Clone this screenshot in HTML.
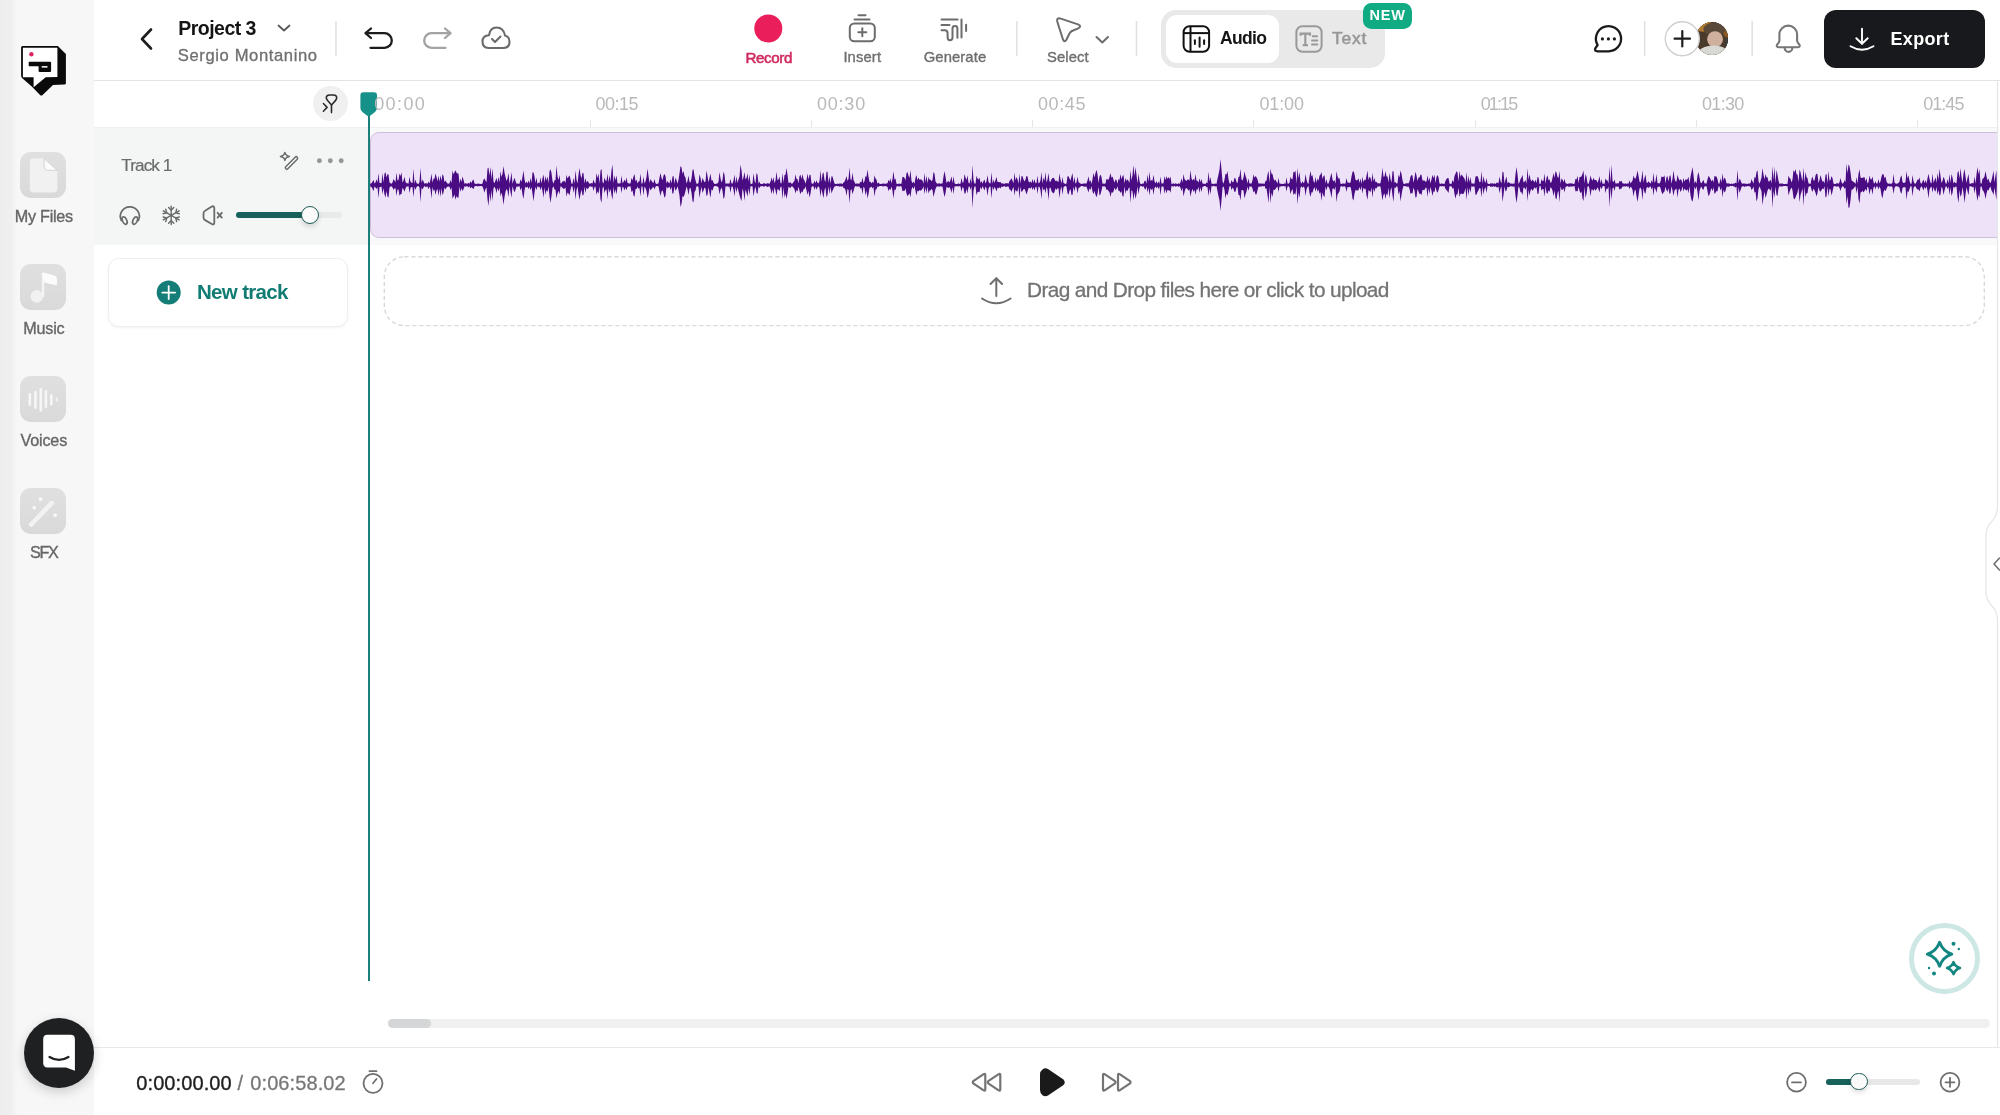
<!DOCTYPE html>
<html><head><meta charset="utf-8">
<style>
html,body{margin:0;padding:0;width:2000px;height:1115px;overflow:hidden;background:#fff;font-family:"Liberation Sans",sans-serif;}
.a{position:absolute;}
.t{position:absolute;line-height:1;white-space:nowrap;transform:translateZ(0);}
svg{position:absolute;overflow:visible;}
</style></head>
<body>
<!-- sidebar -->
<div class="a" style="left:0;top:0;width:94px;height:1115px;background:#f7f7f7;"></div>
<div class="a" style="left:0;top:0;width:20px;height:1115px;background:linear-gradient(90deg,#ededed 0px,#efefef 11px,#f7f7f7 17px);"></div>
<!-- logo -->
<svg style="left:0;top:0" width="94" height="110" viewBox="0 0 94 110">
  <path d="M22.5 46 L57.8 46 L65.9 54.1 L65.9 83.2 Q65.9 84.6 64.5 84.6 L53 85 L42.6 95 Q41.3 96.2 40 95 L31.8 86.6 L22.6 78.6 Q21.1 77.3 21.1 75.8 L21.1 47.5 Q21.1 46 22.5 46Z" fill="#0a0a0a"/>
  <path d="M22.9 47.8 L57.4 47.8 L57.4 77 L45.7 77.2 L33.6 87.3 L33.6 77.2 L22.9 77.2Z" fill="#fff"/>
  <path d="M28.7 61.7 L50 61.7 Q51.1 61.7 51.1 62.8 L51.1 70.9 Q51.1 72 50 72 L39.7 72 Q38.6 72 38.6 70.9 L38.6 66.2 L28.7 66.2Z" fill="#0a0a0a"/>
  <rect x="41.7" y="66.1" width="5.8" height="1.5" fill="#fff"/>
  <circle cx="31.4" cy="54.3" r="2.2" fill="#e0245e"/>
</svg>
<!-- sidebar items -->
<div class="a" style="left:20px;top:152px;width:46px;height:46px;border-radius:11px;background:linear-gradient(180deg,#e0e0e0,#d9d9d9);"></div>
<svg style="left:20px;top:152px" width="46" height="46" viewBox="0 0 46 46">
  <path d="M13.8 6.2 L24.1 6.2 L37.4 18.5 L37.4 36.5 Q37.4 40.5 33.4 40.5 L13.8 40.5 Q9.8 40.5 9.8 36.5 L9.8 10.2 Q9.8 6.2 13.8 6.2Z" fill="#f1f1f1"/>
  <path d="M24.1 6.6 L24.1 14 Q24.1 18.3 28.4 18.3 L37.2 18.3 Z" fill="#fbfbfb" stroke="#cfcfcf" stroke-width="0.9" stroke-linejoin="round"/>
</svg>
<div class="a" style="left:20px;top:264px;width:46px;height:46px;border-radius:11px;background:linear-gradient(180deg,#e0e0e0,#d9d9d9);"></div>
<svg style="left:20px;top:264px" width="46" height="46" viewBox="0 0 46 46">
  <circle cx="16.8" cy="32.4" r="6.3" fill="#f1f1f1"/>
  <rect x="21.8" y="10" width="2.4" height="23" fill="#f4f4f4"/>
  <path d="M21.8 9.6 Q21.8 8.2 23.5 8.6 L34.5 11.6 Q37 12.4 37 15 L37 19.6 Q37 21.6 35 21.1 L24.2 18.6Z" fill="#fbfbfb"/>
</svg>
<div class="a" style="left:20px;top:376px;width:46px;height:46px;border-radius:11px;background:linear-gradient(180deg,#e0e0e0,#d9d9d9);"></div>
<svg style="left:20px;top:376px" width="46" height="46" viewBox="0 0 46 46">
  <g stroke="#f6f6f6" stroke-width="2.6" stroke-linecap="round">
  <line x1="9.8" y1="18.2" x2="9.8" y2="28.6"/><line x1="15.4" y1="16" x2="15.4" y2="31.8"/><line x1="20.8" y1="13" x2="20.8" y2="34.4"/>
  <line x1="25.9" y1="15.6" x2="25.9" y2="30.8"/><line x1="31.3" y1="19.5" x2="31.3" y2="28.3"/>
  </g>
  <line x1="36.9" y1="22.5" x2="36.9" y2="24.8" stroke="#eeeeee" stroke-width="2.2" stroke-linecap="round"/>
</svg>
<div class="a" style="left:20px;top:488px;width:46px;height:46px;border-radius:11px;background:linear-gradient(180deg,#e0e0e0,#d9d9d9);"></div>
<svg style="left:20px;top:488px" width="46" height="46" viewBox="0 0 46 46">
  <line x1="11.2" y1="36.5" x2="31.6" y2="15.2" stroke="#f2f2f2" stroke-width="4.6" stroke-linecap="round"/>
  <rect x="18.9" y="9.6" width="3.4" height="3.4" rx="0.8" fill="#f7f7f7"/>
  <rect x="12.5" y="18.1" width="3.4" height="3.4" rx="0.8" fill="#f7f7f7"/>
  <rect x="33.4" y="25.5" width="3.4" height="3.4" rx="0.8" fill="#f7f7f7"/>
</svg>

<!-- header -->
<div class="a" style="left:94px;top:80px;width:1906px;height:1px;background:#e4e4e4;"></div>
<svg style="left:0;top:0" width="2000" height="80" viewBox="0 0 2000 80">
  <polyline points="151,29.5 142,39 151,48.5" fill="none" stroke="#1e1e1e" stroke-width="2.6" stroke-linecap="round" stroke-linejoin="round"/>
  <polyline points="278.5,25.5 284,30.5 289.5,25.5" fill="none" stroke="#555" stroke-width="1.7" stroke-linecap="round" stroke-linejoin="round"/>
  <g stroke="#e2e2e2" stroke-width="1.6">
    <line x1="336" y1="21" x2="336" y2="56"/><line x1="1016.8" y1="21" x2="1016.8" y2="56"/><line x1="1136.5" y1="21" x2="1136.5" y2="56"/>
    <line x1="1644.7" y1="21" x2="1644.7" y2="56"/><line x1="1752.2" y1="21" x2="1752.2" y2="56"/>
  </g>
  <!-- undo -->
  <g fill="none" stroke="#1c1c1c" stroke-width="2.3" stroke-linecap="round" stroke-linejoin="round">
    <polyline points="371,28.5 365.5,33.2 371,38"/>
    <path d="M366 33.2 L384.5 33.2 A7.3 7.3 0 0 1 384.5 47.8 L370.5 47.8"/>
  </g>
  <!-- redo -->
  <g fill="none" stroke="#a3a3a3" stroke-width="2.3" stroke-linecap="round" stroke-linejoin="round">
    <polyline points="445,28.5 450.5,33.2 445,38"/>
    <path d="M450 33.2 L431.5 33.2 A7.3 7.3 0 0 0 431.5 47.8 L445.5 47.8"/>
  </g>
  <!-- cloud -->
  <g fill="none" stroke="#6b6b6b" stroke-width="2.1" stroke-linecap="round" stroke-linejoin="round">
    <path d="M488.5 48 Q482.5 48 482.5 41.5 Q482.5 35.5 489 35.2 Q490 27.5 496.5 27.5 Q503.5 27.5 505 35.5 Q509.5 36.5 509.5 41.8 Q509.5 48 503.5 48 Z"/>
    <polyline points="492,39 495,42 500.5,36.5"/>
  </g>
  <!-- record -->
  <circle cx="768.3" cy="28.5" r="14" fill="#e91e5b"/>
  <!-- insert -->
  <g fill="none" stroke="#6c6c6c" stroke-width="2" stroke-linecap="round">
    <line x1="858.5" y1="15.3" x2="865.5" y2="15.3"/>
    <line x1="854.5" y1="19.5" x2="869.5" y2="19.5"/>
    <rect x="849.8" y="23.5" width="25" height="17.8" rx="4.5"/>
    <line x1="862.3" y1="28.2" x2="862.3" y2="36.2"/><line x1="858.3" y1="32.2" x2="866.3" y2="32.2"/>
  </g>
  <!-- generate -->
  <g fill="none" stroke="#6c6c6c" stroke-width="2" stroke-linecap="round" stroke-linejoin="round">
    <line x1="941.5" y1="19.6" x2="957.6" y2="19.6"/>
    <line x1="941.5" y1="25" x2="949.5" y2="25"/>
    <path d="M941.5 30.3 L944.8 30.3 Q947.6 30.3 947.6 33.2 L947.6 37.6 Q947.6 40.2 950.05 40.2 Q952.5 40.2 952.5 37.6 L952.5 28.5 Q952.5 26.1 954.95 26.1 Q957.4 26.1 957.4 28.5 L957.4 37.8"/>
    <line x1="961.5" y1="19.5" x2="961.5" y2="37.6"/>
    <line x1="966.1" y1="24.8" x2="966.1" y2="31"/>
  </g>
  <!-- select -->
  <g fill="none" stroke="#6c6c6c" stroke-width="2" stroke-linecap="round" stroke-linejoin="round">
    <path d="M1057.3 21.8 Q1056.2 17.4 1060.8 18.6 L1078 24.4 Q1082.2 26.2 1078.2 28.4 L1072 31 Q1070 32 1069.2 34 L1066.4 39.8 Q1064.5 42.8 1063 39.5 Z"/>
    <polyline points="1096.5,37 1102.3,42.5 1108,37"/>
  </g>
</svg>
<!-- audio/text toggle -->
<div class="a" style="left:1161px;top:10px;width:224px;height:58px;border-radius:15px;background:#e9e9e9;"></div>
<div class="a" style="left:1166px;top:15px;width:113px;height:48px;border-radius:11px;background:#fff;"></div>
<svg style="left:0;top:0" width="2000" height="80" viewBox="0 0 2000 80">
  <g fill="none" stroke="#111" stroke-width="2" stroke-linecap="round">
    <rect x="1183.6" y="26.2" width="25.5" height="25.5" rx="6"/>
    <line x1="1190.5" y1="26.5" x2="1190.5" y2="51.5" stroke-linecap="butt"/>
    <line x1="1183.8" y1="33.1" x2="1209" y2="33.1" stroke-linecap="butt"/>
    <line x1="1194.9" y1="40.3" x2="1194.9" y2="44"/><line x1="1199.6" y1="37.6" x2="1199.6" y2="46.8"/><line x1="1204.1" y1="40.3" x2="1204.1" y2="44"/>
  </g>
  <g fill="none" stroke="#999" stroke-width="2" stroke-linecap="round">
    <rect x="1296.4" y="26.2" width="25.2" height="25.5" rx="6"/>
  </g>
  <g fill="none" stroke="#999" stroke-width="2.1" stroke-linecap="butt">
    <path d="M1300.6 35.8 L1300.6 33.6 L1310 33.6 L1310 35.8"/>
    <line x1="1305.3" y1="33.6" x2="1305.3" y2="45.2"/><line x1="1302.6" y1="45.2" x2="1308" y2="45.2"/>
  </g>
  <g fill="none" stroke="#999" stroke-width="2" stroke-linecap="round">
    <line x1="1312.8" y1="36.3" x2="1317" y2="36.3"/><line x1="1312" y1="40.5" x2="1317.3" y2="40.5"/><line x1="1312" y1="44.5" x2="1317.3" y2="44.5"/>
  </g>
</svg>
<div class="a" style="left:1363px;top:2.5px;width:49px;height:26.5px;border-radius:8.5px;background:#10ab82;"></div>

<!-- avatar -->
<div class="a" style="left:1695.7px;top:22.4px;width:32.6px;height:32.6px;border-radius:50%;overflow:hidden;background:#4a3a2c;">
<svg style="left:0;top:0" width="33" height="33" viewBox="1695.7 22.4 32.6 32.6">
    <rect x="1695" y="22" width="34" height="34" fill="#4a3a2c"/>
    <ellipse cx="1703" cy="26" rx="9" ry="6" fill="#b47c30"/>
    <ellipse cx="1727" cy="30" rx="5" ry="8" fill="#8a5a22"/>
    <ellipse cx="1714" cy="29.5" rx="11" ry="6.5" fill="#5a4838"/>
    <ellipse cx="1714.5" cy="39.5" rx="7.8" ry="8" fill="#cfb09e"/>
    <ellipse cx="1728" cy="44" rx="3.5" ry="7" fill="#3c3c3c"/>
    <ellipse cx="1713" cy="55" rx="16" ry="9.5" fill="#d8d8d4"/>
</svg></div>
<!-- right header -->
<svg style="left:0;top:0" width="2000" height="80" viewBox="0 0 2000 80">
  <g fill="none" stroke="#1a1a1a" stroke-width="2.3" stroke-linejoin="round" stroke-linecap="round">
    <path d="M1608.5 51.3 A12.6 12.6 0 1 0 1597.6 45 L1595.3 48.4 Q1594.2 51.3 1597.6 51.3 Z"/>
  </g>
  <circle cx="1602.4" cy="38.9" r="1.6" fill="#1a1a1a"/><circle cx="1608.4" cy="38.9" r="1.6" fill="#1a1a1a"/><circle cx="1614.4" cy="38.9" r="1.6" fill="#1a1a1a"/>
  <circle cx="1682.3" cy="38.7" r="17" fill="#fff" stroke="#cfcfcf" stroke-width="1.4"/>
  <g stroke="#1e1e1e" stroke-width="2.2" stroke-linecap="round">
    <line x1="1682.3" y1="31" x2="1682.3" y2="46.4"/><line x1="1674.6" y1="38.7" x2="1690" y2="38.7"/>
  </g>
  <!-- bell -->
  <g fill="none" stroke="#777" stroke-width="2.1" stroke-linejoin="round" stroke-linecap="round">
    <path d="M1779.4 40.6 L1779.4 34.5 A8.85 8.85 0 0 1 1797.1 34.5 L1797.1 40.6 Q1797.1 41.6 1798 42.8 L1799.2 44.3 Q1800.8 47.3 1797.3 47.3 L1779.2 47.3 Q1775.7 47.3 1777.3 44.3 L1778.5 42.8 Q1779.4 41.6 1779.4 40.6 Z"/>
    <path d="M1784.6 47.6 A3.9 4.3 0 0 0 1792.4 47.6"/>
  </g>
</svg>
<div class="a" style="left:1824px;top:10px;width:161px;height:58px;border-radius:12px;background:#18191c;"></div>
<svg style="left:0;top:0" width="2000" height="80" viewBox="0 0 2000 80">
  <g fill="none" stroke="#fff" stroke-width="1.9" stroke-linecap="round" stroke-linejoin="round">
    <line x1="1862" y1="28.8" x2="1862" y2="43.5"/>
    <polyline points="1856.3,38.2 1862,43.8 1867.7,38.2"/>
    <path d="M1850.5 46.3 Q1862 53.2 1873.5 46.3"/>
  </g>
</svg>

<!-- ruler -->
<div class="a" style="left:94px;top:127px;width:1903px;height:1px;background:#f0f0f0;"></div>
<svg style="left:0;top:80px" width="2000" height="50" viewBox="0 80 2000 50">
  <g stroke="#e6e6e6" stroke-width="1">
    <line x1="590.5" y1="120" x2="590.5" y2="127"/><line x1="811.5" y1="120" x2="811.5" y2="127"/><line x1="1032.5" y1="120" x2="1032.5" y2="127"/>
    <line x1="1253.5" y1="120" x2="1253.5" y2="127"/><line x1="1475.5" y1="120" x2="1475.5" y2="127"/><line x1="1696.5" y1="120" x2="1696.5" y2="127"/><line x1="1917.5" y1="120" x2="1917.5" y2="127"/>
  </g>
</svg>
<div class="a" style="left:312.5px;top:85.5px;width:35px;height:35px;border-radius:50%;background:#f0f0f0;"></div>
<svg style="left:0;top:80px" width="400" height="50" viewBox="0 80 400 50">
  <g fill="none" stroke="#2a2a2a" stroke-width="1.55" stroke-linecap="round" stroke-linejoin="round">
    <path d="M331.5 104.9 L327.6 100.6 Q326.3 99.2 326.3 97.8 Q326.3 94.9 329.5 94.9 L333.5 94.9 Q336.7 94.9 336.7 97.8 Q336.7 99.2 335.4 100.6 Z"/>
    <line x1="331.5" y1="104.9" x2="331.5" y2="112.6"/>
    <polyline points="323.4,103.5 327.1,107.4 323.4,111.2"/>
  </g>
</svg>

<!-- track panel -->
<div class="a" style="left:94px;top:128px;width:274px;height:117px;background:#f4f6f6;"></div>
<div class="a" style="left:370px;top:128px;width:1627px;height:117px;background:#faf9fa;"></div>
<div class="a" style="left:369.5px;top:131.5px;width:1640px;height:104px;border:1.6px solid #cdbfd9;border-radius:9px;background:#eee2f8;"></div>
<svg style="left:0;top:0" width="2000" height="260" viewBox="0 0 2000 260">
  <path d="M370 185.0L370.5 183.4L371.5 183.3L372.5 181.7L373.5 179.8L374.5 183.5L375.5 182.6L376.5 179.2L377.5 182.6L378.5 173.1L379.5 183.0L380.5 183.1L381.5 183.2L382.5 173.1L383.5 182.5L384.5 173.5L385.5 172.3L386.5 177.4L387.5 174.1L388.5 174.5L389.5 182.4L390.5 183.3L391.5 183.7L392.5 182.4L393.5 178.9L394.5 180.6L395.5 182.3L396.5 172.4L397.5 180.4L398.5 180.1L399.5 173.4L400.5 176.0L401.5 172.3L402.5 182.4L403.5 180.7L404.5 176.7L405.5 181.7L406.5 183.3L407.5 183.2L408.5 183.8L409.5 176.8L410.5 181.8L411.5 182.8L412.5 182.9L413.5 168.4L414.5 183.7L415.5 179.4L416.5 182.9L417.5 183.7L418.5 184.0L419.5 181.9L420.5 167.7L421.5 182.9L422.5 179.4L423.5 181.6L424.5 183.8L425.5 183.2L426.5 183.2L427.5 183.7L428.5 181.4L429.5 183.5L430.5 179.8L431.5 173.5L432.5 182.8L433.5 178.8L434.5 178.7L435.5 173.4L436.5 177.0L437.5 181.2L438.5 175.6L439.5 181.8L440.5 175.2L441.5 181.1L442.5 174.0L443.5 176.0L444.5 182.3L445.5 180.6L446.5 182.2L447.5 183.4L448.5 183.8L449.5 183.3L450.5 179.9L451.5 182.9L452.5 170.4L453.5 174.2L454.5 172.3L455.5 170.3L456.5 172.7L457.5 173.6L458.5 173.4L459.5 183.7L460.5 178.4L461.5 182.1L462.5 176.4L463.5 179.7L464.5 183.7L465.5 183.2L466.5 183.6L467.5 183.8L468.5 182.8L469.5 183.8L470.5 181.3L471.5 183.1L472.5 180.6L473.5 179.5L474.5 183.6L475.5 183.8L476.5 184.0L477.5 183.6L478.5 183.7L479.5 183.8L480.5 183.9L481.5 184.0L482.5 183.5L483.5 179.6L484.5 178.4L485.5 180.8L486.5 182.2L487.5 168.5L488.5 167.8L489.5 175.8L490.5 166.8L491.5 179.3L492.5 168.2L493.5 181.6L494.5 183.3L495.5 180.6L496.5 177.7L497.5 182.6L498.5 176.8L499.5 182.2L500.5 171.1L501.5 177.1L502.5 173.6L503.5 166.0L504.5 172.7L505.5 177.1L506.5 181.0L507.5 178.4L508.5 173.0L509.5 183.7L510.5 179.1L511.5 171.9L512.5 183.8L513.5 180.6L514.5 177.8L515.5 180.9L516.5 183.7L517.5 183.5L518.5 183.7L519.5 183.8L520.5 179.2L521.5 182.0L522.5 176.7L523.5 170.6L524.5 179.6L525.5 183.6L526.5 181.5L527.5 183.5L528.5 180.4L529.5 183.5L530.5 178.0L531.5 183.1L532.5 172.5L533.5 172.2L534.5 176.6L535.5 183.0L536.5 177.5L537.5 184.1L538.5 182.4L539.5 183.3L540.5 177.2L541.5 183.4L542.5 178.1L543.5 174.4L544.5 182.8L545.5 175.7L546.5 180.8L547.5 176.3L548.5 183.5L549.5 171.2L550.5 169.3L551.5 173.1L552.5 181.0L553.5 183.8L554.5 180.2L555.5 180.0L556.5 165.4L557.5 176.3L558.5 180.0L559.5 174.7L560.5 183.4L561.5 183.3L562.5 181.4L563.5 181.3L564.5 180.8L565.5 183.0L566.5 174.8L567.5 178.6L568.5 176.7L569.5 175.4L570.5 178.9L571.5 183.7L572.5 183.7L573.5 177.7L574.5 183.8L575.5 170.3L576.5 179.7L577.5 183.4L578.5 174.8L579.5 168.0L580.5 174.8L581.5 178.6L582.5 172.7L583.5 173.2L584.5 183.5L585.5 177.9L586.5 182.7L587.5 180.8L588.5 182.3L589.5 183.7L590.5 183.5L591.5 183.1L592.5 183.6L593.5 179.6L594.5 182.7L595.5 183.6L596.5 172.9L597.5 178.1L598.5 173.4L599.5 183.7L600.5 170.4L601.5 168.8L602.5 182.1L603.5 183.4L604.5 177.4L605.5 180.6L606.5 180.9L607.5 173.5L608.5 182.5L609.5 174.9L610.5 181.7L611.5 170.0L612.5 164.7L613.5 183.4L614.5 175.3L615.5 180.6L616.5 175.3L617.5 183.3L618.5 183.5L619.5 183.2L620.5 183.6L621.5 175.6L622.5 183.2L623.5 181.9L624.5 179.5L625.5 182.1L626.5 177.3L627.5 183.1L628.5 183.3L629.5 183.4L630.5 183.4L631.5 177.8L632.5 180.4L633.5 176.5L634.5 174.1L635.5 181.4L636.5 179.6L637.5 183.5L638.5 181.4L639.5 181.2L640.5 173.4L641.5 183.7L642.5 183.3L643.5 176.5L644.5 183.4L645.5 181.4L646.5 177.1L647.5 168.6L648.5 175.9L649.5 182.9L650.5 179.0L651.5 180.8L652.5 182.3L653.5 183.0L654.5 179.1L655.5 183.2L656.5 184.0L657.5 183.7L658.5 183.2L659.5 177.8L660.5 173.0L661.5 177.8L662.5 180.2L663.5 175.4L664.5 173.9L665.5 176.0L666.5 183.6L667.5 181.0L668.5 182.4L669.5 183.5L670.5 179.0L671.5 183.4L672.5 176.4L673.5 176.0L674.5 183.8L675.5 177.6L676.5 180.1L677.5 183.7L678.5 179.7L679.5 173.2L680.5 166.0L681.5 167.4L682.5 173.7L683.5 171.0L684.5 175.9L685.5 177.6L686.5 183.5L687.5 180.9L688.5 175.6L689.5 182.0L690.5 182.5L691.5 178.6L692.5 170.0L693.5 169.2L694.5 176.0L695.5 180.3L696.5 183.8L697.5 183.8L698.5 183.1L699.5 174.3L700.5 177.8L701.5 183.3L702.5 177.7L703.5 180.2L704.5 182.2L705.5 181.6L706.5 170.2L707.5 176.0L708.5 182.2L709.5 177.9L710.5 173.5L711.5 180.8L712.5 180.1L713.5 182.5L714.5 183.9L715.5 184.0L716.5 183.6L717.5 183.5L718.5 181.8L719.5 171.9L720.5 178.3L721.5 182.5L722.5 180.1L723.5 171.5L724.5 174.7L725.5 183.8L726.5 183.5L727.5 183.5L728.5 183.4L729.5 183.4L730.5 178.7L731.5 183.4L732.5 183.6L733.5 180.4L734.5 174.6L735.5 183.4L736.5 176.3L737.5 183.0L738.5 179.2L739.5 176.6L740.5 164.8L741.5 170.2L742.5 180.6L743.5 177.3L744.5 172.0L745.5 179.6L746.5 178.0L747.5 173.3L748.5 181.6L749.5 174.5L750.5 183.7L751.5 183.9L752.5 183.6L753.5 173.2L754.5 180.6L755.5 183.4L756.5 172.9L757.5 174.7L758.5 183.8L759.5 181.4L760.5 184.0L761.5 183.9L762.5 184.1L763.5 183.2L764.5 183.3L765.5 184.1L766.5 183.4L767.5 183.3L768.5 183.5L769.5 183.8L770.5 181.8L771.5 177.3L772.5 181.6L773.5 177.0L774.5 183.2L775.5 180.6L776.5 171.5L777.5 180.3L778.5 179.6L779.5 176.6L780.5 182.9L781.5 183.5L782.5 172.9L783.5 182.7L784.5 174.9L785.5 174.8L786.5 168.0L787.5 174.8L788.5 183.1L789.5 182.7L790.5 182.3L791.5 183.8L792.5 183.5L793.5 182.0L794.5 180.8L795.5 174.3L796.5 179.1L797.5 179.1L798.5 183.2L799.5 176.1L800.5 174.7L801.5 178.9L802.5 174.1L803.5 179.0L804.5 180.6L805.5 183.8L806.5 180.1L807.5 173.4L808.5 179.6L809.5 174.7L810.5 175.0L811.5 183.3L812.5 183.7L813.5 183.6L814.5 180.6L815.5 183.3L816.5 180.3L817.5 182.7L818.5 183.6L819.5 181.1L820.5 170.3L821.5 181.7L822.5 174.1L823.5 172.2L824.5 180.1L825.5 182.0L826.5 171.7L827.5 171.8L828.5 183.1L829.5 175.9L830.5 183.8L831.5 176.2L832.5 176.5L833.5 180.3L834.5 183.5L835.5 183.9L836.5 184.0L837.5 183.5L838.5 184.0L839.5 183.5L840.5 183.5L841.5 183.5L842.5 184.0L843.5 182.4L844.5 181.8L845.5 179.3L846.5 176.0L847.5 181.0L848.5 178.7L849.5 167.4L850.5 179.2L851.5 180.2L852.5 172.6L853.5 180.0L854.5 182.1L855.5 183.9L856.5 183.6L857.5 183.6L858.5 183.7L859.5 183.5L860.5 181.8L861.5 182.3L862.5 177.3L863.5 183.2L864.5 180.9L865.5 176.1L866.5 177.0L867.5 169.6L868.5 176.7L869.5 182.1L870.5 181.7L871.5 183.6L872.5 181.8L873.5 183.2L874.5 175.2L875.5 178.4L876.5 179.8L877.5 183.7L878.5 182.6L879.5 183.8L880.5 184.0L881.5 183.9L882.5 183.5L883.5 183.5L884.5 183.8L885.5 183.8L886.5 183.4L887.5 183.3L888.5 179.7L889.5 181.7L890.5 178.3L891.5 183.6L892.5 178.8L893.5 171.2L894.5 179.7L895.5 178.6L896.5 183.7L897.5 184.0L898.5 183.7L899.5 183.4L900.5 183.9L901.5 183.5L902.5 176.7L903.5 177.1L904.5 177.7L905.5 180.4L906.5 173.3L907.5 171.9L908.5 175.7L909.5 177.9L910.5 169.9L911.5 181.1L912.5 183.2L913.5 181.4L914.5 183.8L915.5 177.8L916.5 175.1L917.5 180.2L918.5 177.6L919.5 179.7L920.5 179.2L921.5 179.7L922.5 180.4L923.5 183.8L924.5 172.7L925.5 182.6L926.5 175.6L927.5 183.4L928.5 176.7L929.5 179.8L930.5 179.4L931.5 181.3L932.5 179.9L933.5 171.9L934.5 173.5L935.5 181.5L936.5 183.0L937.5 183.8L938.5 183.5L939.5 183.3L940.5 183.8L941.5 183.4L942.5 183.5L943.5 176.6L944.5 171.0L945.5 176.6L946.5 183.0L947.5 181.7L948.5 181.0L949.5 182.5L950.5 180.1L951.5 176.2L952.5 183.1L953.5 176.3L954.5 183.1L955.5 184.0L956.5 183.9L957.5 183.9L958.5 183.3L959.5 184.0L960.5 183.7L961.5 177.8L962.5 182.8L963.5 182.2L964.5 174.0L965.5 177.6L966.5 180.0L967.5 175.2L968.5 182.8L969.5 183.8L970.5 178.3L971.5 183.8L972.5 165.1L973.5 180.2L974.5 183.4L975.5 183.8L976.5 175.8L977.5 178.5L978.5 179.4L979.5 177.6L980.5 183.0L981.5 180.9L982.5 183.7L983.5 181.1L984.5 179.5L985.5 183.5L986.5 181.2L987.5 175.1L988.5 181.8L989.5 183.3L990.5 183.5L991.5 172.1L992.5 183.7L993.5 179.4L994.5 183.0L995.5 179.9L996.5 176.9L997.5 182.0L998.5 182.0L999.5 182.2L1000.5 182.0L1001.5 183.6L1002.5 183.2L1003.5 183.8L1004.5 183.7L1005.5 183.2L1006.5 183.3L1007.5 183.3L1008.5 183.7L1009.5 181.0L1010.5 179.8L1011.5 178.2L1012.5 180.8L1013.5 183.2L1014.5 172.5L1015.5 180.6L1016.5 176.9L1017.5 179.2L1018.5 183.7L1019.5 173.5L1020.5 183.5L1021.5 176.3L1022.5 176.1L1023.5 179.6L1024.5 181.4L1025.5 179.6L1026.5 175.7L1027.5 176.6L1028.5 181.2L1029.5 182.6L1030.5 181.3L1031.5 183.2L1032.5 178.8L1033.5 183.0L1034.5 178.9L1035.5 183.2L1036.5 183.1L1037.5 175.6L1038.5 183.4L1039.5 182.7L1040.5 180.3L1041.5 171.9L1042.5 183.7L1043.5 177.4L1044.5 180.8L1045.5 172.0L1046.5 182.5L1047.5 179.4L1048.5 172.9L1049.5 181.7L1050.5 181.7L1051.5 179.3L1052.5 177.9L1053.5 177.8L1054.5 179.1L1055.5 181.3L1056.5 180.4L1057.5 181.5L1058.5 182.1L1059.5 173.3L1060.5 179.6L1061.5 183.6L1062.5 176.9L1063.5 182.9L1064.5 183.6L1065.5 184.1L1066.5 183.4L1067.5 176.3L1068.5 176.2L1069.5 178.5L1070.5 180.5L1071.5 176.5L1072.5 173.0L1073.5 182.9L1074.5 176.7L1075.5 183.8L1076.5 182.2L1077.5 176.6L1078.5 182.1L1079.5 182.9L1080.5 183.5L1081.5 183.9L1082.5 183.8L1083.5 183.6L1084.5 183.4L1085.5 183.5L1086.5 183.6L1087.5 180.6L1088.5 176.2L1089.5 181.7L1090.5 180.2L1091.5 183.9L1092.5 179.3L1093.5 172.7L1094.5 177.5L1095.5 173.1L1096.5 169.7L1097.5 174.2L1098.5 183.1L1099.5 176.5L1100.5 174.6L1101.5 176.9L1102.5 183.7L1103.5 183.5L1104.5 183.7L1105.5 183.4L1106.5 178.8L1107.5 179.4L1108.5 179.7L1109.5 176.9L1110.5 173.0L1111.5 177.8L1112.5 176.4L1113.5 179.5L1114.5 182.7L1115.5 179.5L1116.5 180.0L1117.5 183.8L1118.5 179.1L1119.5 179.9L1120.5 174.1L1121.5 179.2L1122.5 175.9L1123.5 175.0L1124.5 183.6L1125.5 177.8L1126.5 181.0L1127.5 179.3L1128.5 181.0L1129.5 182.7L1130.5 170.1L1131.5 180.4L1132.5 175.1L1133.5 164.9L1134.5 176.2L1135.5 166.9L1136.5 175.0L1137.5 183.6L1138.5 173.2L1139.5 181.2L1140.5 184.1L1141.5 184.0L1142.5 183.4L1143.5 183.8L1144.5 180.9L1145.5 180.4L1146.5 183.7L1147.5 174.3L1148.5 181.7L1149.5 171.6L1150.5 181.2L1151.5 179.9L1152.5 180.7L1153.5 174.8L1154.5 181.3L1155.5 183.5L1156.5 180.9L1157.5 183.8L1158.5 181.6L1159.5 183.8L1160.5 176.6L1161.5 183.4L1162.5 183.5L1163.5 183.3L1164.5 176.0L1165.5 180.2L1166.5 176.0L1167.5 178.9L1168.5 177.0L1169.5 179.1L1170.5 176.6L1171.5 183.9L1172.5 183.7L1173.5 183.3L1174.5 184.0L1175.5 183.3L1176.5 183.8L1177.5 184.1L1178.5 183.3L1179.5 184.1L1180.5 182.3L1181.5 178.2L1182.5 182.8L1183.5 174.1L1184.5 179.0L1185.5 180.3L1186.5 181.0L1187.5 179.6L1188.5 179.5L1189.5 180.8L1190.5 170.0L1191.5 178.6L1192.5 180.6L1193.5 178.7L1194.5 180.8L1195.5 173.9L1196.5 180.7L1197.5 180.8L1198.5 182.7L1199.5 178.3L1200.5 182.2L1201.5 178.9L1202.5 183.4L1203.5 183.7L1204.5 183.7L1205.5 183.9L1206.5 182.4L1207.5 182.9L1208.5 171.5L1209.5 181.2L1210.5 177.0L1211.5 183.8L1212.5 183.7L1213.5 184.0L1214.5 183.8L1215.5 183.4L1216.5 183.9L1217.5 178.8L1218.5 174.6L1219.5 169.4L1220.5 159.0L1221.5 169.4L1222.5 181.2L1223.5 183.7L1224.5 179.6L1225.5 173.8L1226.5 174.6L1227.5 170.9L1228.5 179.3L1229.5 183.5L1230.5 183.7L1231.5 180.1L1232.5 182.2L1233.5 181.9L1234.5 177.7L1235.5 178.5L1236.5 182.0L1237.5 183.3L1238.5 176.9L1239.5 176.4L1240.5 168.8L1241.5 179.6L1242.5 180.4L1243.5 177.6L1244.5 171.2L1245.5 175.7L1246.5 178.6L1247.5 183.4L1248.5 178.2L1249.5 183.4L1250.5 183.4L1251.5 183.6L1252.5 180.3L1253.5 174.2L1254.5 177.7L1255.5 176.1L1256.5 177.2L1257.5 179.5L1258.5 183.5L1259.5 183.6L1260.5 183.6L1261.5 183.5L1262.5 183.7L1263.5 183.5L1264.5 184.1L1265.5 181.1L1266.5 180.8L1267.5 174.4L1268.5 170.7L1269.5 183.1L1270.5 168.4L1271.5 173.8L1272.5 174.1L1273.5 178.6L1274.5 180.7L1275.5 179.6L1276.5 181.7L1277.5 183.5L1278.5 177.8L1279.5 183.6L1280.5 183.7L1281.5 183.8L1282.5 183.9L1283.5 184.0L1284.5 183.2L1285.5 184.1L1286.5 177.2L1287.5 183.4L1288.5 183.8L1289.5 182.8L1290.5 176.8L1291.5 179.1L1292.5 179.4L1293.5 171.6L1294.5 172.5L1295.5 170.6L1296.5 183.7L1297.5 168.1L1298.5 178.6L1299.5 171.7L1300.5 182.1L1301.5 183.7L1302.5 181.0L1303.5 183.3L1304.5 181.7L1305.5 173.9L1306.5 179.6L1307.5 183.1L1308.5 184.0L1309.5 176.6L1310.5 171.0L1311.5 176.6L1312.5 174.9L1313.5 181.2L1314.5 183.0L1315.5 176.8L1316.5 182.7L1317.5 178.6L1318.5 180.8L1319.5 175.8L1320.5 174.6L1321.5 172.1L1322.5 179.1L1323.5 176.1L1324.5 175.3L1325.5 183.4L1326.5 178.9L1327.5 183.7L1328.5 183.5L1329.5 180.5L1330.5 176.6L1331.5 172.8L1332.5 179.6L1333.5 181.5L1334.5 180.0L1335.5 183.8L1336.5 171.1L1337.5 176.2L1338.5 178.7L1339.5 177.9L1340.5 183.8L1341.5 184.0L1342.5 183.4L1343.5 183.4L1344.5 183.7L1345.5 183.4L1346.5 177.9L1347.5 182.6L1348.5 182.4L1349.5 183.1L1350.5 182.6L1351.5 176.5L1352.5 172.0L1353.5 170.9L1354.5 174.1L1355.5 179.7L1356.5 180.4L1357.5 180.1L1358.5 178.2L1359.5 182.9L1360.5 178.3L1361.5 183.9L1362.5 176.5L1363.5 182.3L1364.5 179.6L1365.5 180.5L1366.5 176.0L1367.5 170.5L1368.5 179.9L1369.5 177.0L1370.5 177.4L1371.5 182.4L1372.5 172.7L1373.5 181.3L1374.5 177.9L1375.5 182.2L1376.5 181.7L1377.5 183.3L1378.5 183.3L1379.5 183.5L1380.5 183.1L1381.5 177.0L1382.5 167.7L1383.5 176.8L1384.5 176.6L1385.5 171.0L1386.5 176.6L1387.5 176.5L1388.5 182.6L1389.5 172.7L1390.5 178.9L1391.5 182.7L1392.5 171.2L1393.5 171.2L1394.5 182.7L1395.5 181.9L1396.5 183.4L1397.5 183.2L1398.5 174.6L1399.5 177.5L1400.5 170.5L1401.5 173.7L1402.5 180.3L1403.5 183.8L1404.5 184.1L1405.5 183.4L1406.5 183.3L1407.5 183.3L1408.5 183.6L1409.5 181.2L1410.5 176.4L1411.5 175.0L1412.5 175.5L1413.5 182.8L1414.5 177.8L1415.5 171.5L1416.5 175.4L1417.5 180.9L1418.5 177.4L1419.5 177.5L1420.5 174.5L1421.5 175.0L1422.5 180.4L1423.5 180.5L1424.5 180.5L1425.5 181.7L1426.5 181.6L1427.5 175.2L1428.5 181.3L1429.5 177.2L1430.5 183.6L1431.5 179.2L1432.5 174.8L1433.5 178.3L1434.5 174.6L1435.5 183.3L1436.5 176.9L1437.5 175.1L1438.5 177.3L1439.5 183.4L1440.5 184.0L1441.5 183.2L1442.5 183.8L1443.5 183.7L1444.5 183.9L1445.5 180.7L1446.5 178.9L1447.5 178.1L1448.5 178.0L1449.5 183.4L1450.5 183.9L1451.5 183.8L1452.5 179.9L1453.5 182.4L1454.5 176.0L1455.5 173.8L1456.5 171.3L1457.5 172.4L1458.5 181.4L1459.5 170.8L1460.5 177.0L1461.5 174.5L1462.5 175.8L1463.5 177.2L1464.5 178.6L1465.5 182.4L1466.5 171.9L1467.5 183.2L1468.5 175.7L1469.5 182.3L1470.5 177.1L1471.5 183.6L1472.5 183.5L1473.5 183.5L1474.5 183.7L1475.5 176.5L1476.5 176.3L1477.5 175.9L1478.5 178.7L1479.5 182.3L1480.5 181.9L1481.5 171.0L1482.5 183.7L1483.5 176.1L1484.5 181.0L1485.5 183.1L1486.5 178.0L1487.5 183.6L1488.5 183.9L1489.5 184.0L1490.5 183.2L1491.5 183.6L1492.5 183.3L1493.5 183.7L1494.5 183.2L1495.5 184.0L1496.5 182.8L1497.5 182.4L1498.5 183.5L1499.5 176.4L1500.5 181.3L1501.5 183.4L1502.5 171.6L1503.5 172.3L1504.5 183.7L1505.5 179.5L1506.5 176.6L1507.5 183.6L1508.5 182.1L1509.5 182.7L1510.5 183.8L1511.5 183.5L1512.5 183.8L1513.5 183.4L1514.5 183.8L1515.5 174.2L1516.5 167.0L1517.5 174.2L1518.5 183.9L1519.5 182.2L1520.5 179.1L1521.5 177.4L1522.5 174.7L1523.5 182.6L1524.5 181.7L1525.5 180.0L1526.5 183.7L1527.5 168.2L1528.5 180.0L1529.5 174.0L1530.5 179.5L1531.5 181.5L1532.5 179.5L1533.5 180.8L1534.5 182.6L1535.5 179.5L1536.5 183.3L1537.5 177.2L1538.5 177.3L1539.5 183.9L1540.5 184.0L1541.5 179.0L1542.5 181.1L1543.5 181.0L1544.5 173.2L1545.5 183.7L1546.5 177.7L1547.5 175.2L1548.5 180.3L1549.5 179.3L1550.5 183.1L1551.5 182.0L1552.5 178.0L1553.5 173.0L1554.5 178.0L1555.5 171.3L1556.5 172.5L1557.5 177.0L1558.5 177.9L1559.5 170.7L1560.5 183.7L1561.5 178.5L1562.5 179.4L1563.5 182.2L1564.5 178.8L1565.5 183.0L1566.5 183.4L1567.5 183.9L1568.5 183.6L1569.5 183.5L1570.5 183.3L1571.5 183.6L1572.5 183.4L1573.5 183.9L1574.5 183.8L1575.5 178.8L1576.5 179.6L1577.5 175.7L1578.5 183.3L1579.5 177.0L1580.5 177.0L1581.5 176.2L1582.5 173.7L1583.5 170.5L1584.5 183.4L1585.5 174.0L1586.5 176.7L1587.5 183.6L1588.5 184.0L1589.5 180.8L1590.5 175.6L1591.5 178.9L1592.5 180.8L1593.5 177.7L1594.5 180.0L1595.5 179.9L1596.5 180.2L1597.5 182.8L1598.5 180.3L1599.5 176.0L1600.5 183.6L1601.5 178.9L1602.5 183.8L1603.5 183.6L1604.5 183.9L1605.5 178.3L1606.5 180.3L1607.5 180.6L1608.5 183.5L1609.5 166.6L1610.5 182.8L1611.5 164.6L1612.5 180.8L1613.5 182.3L1614.5 179.6L1615.5 183.6L1616.5 183.6L1617.5 183.3L1618.5 183.5L1619.5 181.0L1620.5 181.6L1621.5 180.8L1622.5 183.2L1623.5 183.4L1624.5 183.7L1625.5 183.3L1626.5 183.9L1627.5 183.3L1628.5 183.7L1629.5 180.3L1630.5 183.4L1631.5 181.9L1632.5 180.7L1633.5 175.4L1634.5 178.2L1635.5 178.7L1636.5 175.4L1637.5 170.5L1638.5 175.8L1639.5 181.4L1640.5 182.8L1641.5 178.5L1642.5 170.3L1643.5 182.5L1644.5 177.8L1645.5 174.6L1646.5 182.3L1647.5 183.0L1648.5 181.3L1649.5 182.5L1650.5 183.8L1651.5 180.2L1652.5 182.8L1653.5 172.4L1654.5 182.7L1655.5 181.2L1656.5 174.1L1657.5 183.1L1658.5 183.3L1659.5 183.4L1660.5 181.4L1661.5 176.3L1662.5 177.1L1663.5 176.9L1664.5 175.3L1665.5 183.4L1666.5 177.1L1667.5 176.3L1668.5 181.4L1669.5 175.9L1670.5 175.3L1671.5 183.8L1672.5 178.7L1673.5 170.2L1674.5 178.6L1675.5 181.4L1676.5 181.5L1677.5 174.7L1678.5 178.2L1679.5 180.6L1680.5 179.2L1681.5 180.1L1682.5 183.7L1683.5 177.8L1684.5 181.8L1685.5 179.2L1686.5 179.8L1687.5 179.2L1688.5 176.8L1689.5 183.7L1690.5 176.4L1691.5 172.1L1692.5 167.1L1693.5 175.0L1694.5 183.4L1695.5 181.0L1696.5 183.7L1697.5 175.6L1698.5 172.1L1699.5 177.5L1700.5 182.4L1701.5 183.3L1702.5 181.5L1703.5 179.7L1704.5 183.2L1705.5 183.6L1706.5 183.5L1707.5 179.3L1708.5 175.8L1709.5 177.2L1710.5 179.0L1711.5 181.5L1712.5 179.6L1713.5 182.6L1714.5 175.8L1715.5 176.4L1716.5 176.5L1717.5 179.3L1718.5 183.8L1719.5 183.5L1720.5 177.9L1721.5 182.8L1722.5 173.2L1723.5 180.6L1724.5 177.4L1725.5 179.1L1726.5 183.3L1727.5 183.6L1728.5 183.3L1729.5 183.7L1730.5 184.1L1731.5 183.6L1732.5 184.1L1733.5 183.5L1734.5 183.5L1735.5 182.4L1736.5 183.6L1737.5 169.7L1738.5 183.2L1739.5 178.7L1740.5 180.1L1741.5 183.1L1742.5 183.8L1743.5 183.4L1744.5 183.4L1745.5 183.7L1746.5 183.8L1747.5 183.9L1748.5 183.6L1749.5 183.6L1750.5 183.3L1751.5 178.9L1752.5 181.5L1753.5 183.5L1754.5 176.8L1755.5 178.3L1756.5 172.0L1757.5 170.3L1758.5 181.3L1759.5 183.8L1760.5 180.9L1761.5 177.4L1762.5 168.1L1763.5 174.7L1764.5 179.2L1765.5 174.1L1766.5 177.2L1767.5 177.3L1768.5 181.5L1769.5 181.3L1770.5 179.5L1771.5 183.5L1772.5 166.1L1773.5 180.1L1774.5 166.5L1775.5 183.5L1776.5 169.8L1777.5 174.7L1778.5 180.8L1779.5 184.0L1780.5 183.4L1781.5 183.6L1782.5 183.5L1783.5 183.9L1784.5 184.0L1785.5 184.0L1786.5 183.8L1787.5 183.9L1788.5 175.5L1789.5 177.9L1790.5 178.8L1791.5 182.5L1792.5 179.4L1793.5 170.1L1794.5 172.2L1795.5 169.0L1796.5 174.3L1797.5 174.6L1798.5 182.1L1799.5 169.6L1800.5 172.0L1801.5 177.2L1802.5 181.2L1803.5 167.4L1804.5 183.1L1805.5 171.8L1806.5 176.9L1807.5 178.2L1808.5 183.2L1809.5 183.8L1810.5 184.0L1811.5 178.9L1812.5 176.5L1813.5 180.6L1814.5 180.4L1815.5 175.5L1816.5 173.6L1817.5 174.2L1818.5 183.2L1819.5 180.1L1820.5 174.9L1821.5 178.8L1822.5 181.7L1823.5 180.9L1824.5 183.6L1825.5 175.0L1826.5 173.7L1827.5 183.6L1828.5 170.8L1829.5 180.8L1830.5 180.1L1831.5 176.0L1832.5 178.2L1833.5 183.4L1834.5 184.1L1835.5 183.9L1836.5 183.3L1837.5 183.3L1838.5 183.7L1839.5 182.3L1840.5 178.1L1841.5 182.1L1842.5 183.7L1843.5 183.0L1844.5 180.2L1845.5 181.9L1846.5 163.6L1847.5 173.6L1848.5 164.6L1849.5 166.3L1850.5 172.2L1851.5 180.6L1852.5 181.0L1853.5 182.0L1854.5 182.6L1855.5 183.9L1856.5 177.0L1857.5 183.5L1858.5 173.7L1859.5 169.2L1860.5 177.4L1861.5 178.0L1862.5 177.8L1863.5 177.5L1864.5 176.9L1865.5 181.5L1866.5 178.0L1867.5 183.4L1868.5 182.3L1869.5 175.6L1870.5 179.2L1871.5 179.4L1872.5 176.4L1873.5 182.2L1874.5 183.7L1875.5 181.0L1876.5 183.8L1877.5 183.2L1878.5 178.9L1879.5 183.4L1880.5 181.2L1881.5 176.4L1882.5 174.0L1883.5 174.3L1884.5 178.2L1885.5 176.4L1886.5 181.6L1887.5 183.3L1888.5 183.7L1889.5 183.5L1890.5 183.7L1891.5 183.8L1892.5 182.8L1893.5 173.7L1894.5 182.5L1895.5 183.6L1896.5 183.8L1897.5 183.5L1898.5 183.1L1899.5 181.6L1900.5 177.2L1901.5 175.3L1902.5 182.1L1903.5 183.0L1904.5 182.7L1905.5 182.3L1906.5 171.0L1907.5 178.6L1908.5 175.2L1909.5 180.9L1910.5 183.7L1911.5 183.7L1912.5 175.1L1913.5 181.3L1914.5 183.5L1915.5 183.7L1916.5 181.9L1917.5 179.4L1918.5 179.9L1919.5 177.2L1920.5 182.9L1921.5 183.7L1922.5 181.6L1923.5 179.4L1924.5 183.3L1925.5 179.9L1926.5 183.6L1927.5 178.3L1928.5 173.7L1929.5 178.8L1930.5 182.5L1931.5 183.5L1932.5 173.2L1933.5 182.9L1934.5 180.2L1935.5 177.3L1936.5 183.1L1937.5 173.0L1938.5 180.1L1939.5 168.8L1940.5 176.0L1941.5 183.1L1942.5 181.0L1943.5 176.8L1944.5 179.1L1945.5 183.3L1946.5 183.7L1947.5 179.1L1948.5 183.4L1949.5 174.1L1950.5 183.0L1951.5 174.0L1952.5 177.5L1953.5 183.6L1954.5 181.8L1955.5 182.9L1956.5 183.3L1957.5 172.7L1958.5 170.7L1959.5 178.7L1960.5 168.1L1961.5 176.8L1962.5 183.0L1963.5 173.8L1964.5 168.9L1965.5 176.5L1966.5 182.9L1967.5 177.9L1968.5 174.0L1969.5 183.7L1970.5 183.7L1971.5 183.2L1972.5 182.9L1973.5 183.6L1974.5 176.6L1975.5 183.7L1976.5 174.2L1977.5 167.0L1978.5 174.2L1979.5 169.0L1980.5 183.2L1981.5 183.7L1982.5 178.7L1983.5 178.3L1984.5 176.6L1985.5 171.0L1986.5 176.6L1987.5 180.4L1988.5 178.6L1989.5 182.1L1990.5 183.2L1991.5 180.2L1992.5 176.1L1993.5 170.7L1994.5 182.5L1995.5 175.2L1996.5 170.2L1997 185.0L1996.5 200.0L1995.5 194.4L1994.5 187.4L1993.5 194.9L1992.5 192.3L1991.5 190.6L1990.5 186.6L1989.5 188.1L1988.5 190.4L1987.5 189.8L1986.5 193.4L1985.5 199.0L1984.5 193.4L1983.5 191.3L1982.5 190.0L1981.5 186.3L1980.5 186.7L1979.5 197.5L1978.5 194.6L1977.5 201.0L1976.5 194.7L1975.5 186.2L1974.5 193.7L1973.5 186.4L1972.5 187.2L1971.5 186.5L1970.5 186.3L1969.5 186.3L1968.5 195.2L1967.5 191.3L1966.5 187.2L1965.5 194.5L1964.5 202.9L1963.5 192.9L1962.5 186.9L1961.5 194.6L1960.5 196.9L1959.5 189.9L1958.5 203.1L1957.5 197.1L1956.5 186.6L1955.5 186.8L1954.5 187.8L1953.5 186.5L1952.5 193.0L1951.5 196.0L1950.5 186.9L1949.5 194.9L1948.5 186.5L1947.5 189.1L1946.5 186.3L1945.5 186.7L1944.5 190.4L1943.5 195.1L1942.5 188.6L1941.5 186.7L1940.5 194.5L1939.5 195.8L1938.5 190.1L1937.5 194.8L1936.5 186.8L1935.5 191.8L1934.5 190.5L1933.5 186.9L1932.5 192.7L1931.5 186.5L1930.5 187.6L1929.5 189.6L1928.5 198.6L1927.5 190.4L1926.5 186.3L1925.5 189.0L1924.5 186.8L1923.5 190.4L1922.5 188.0L1921.5 186.3L1920.5 187.4L1919.5 191.5L1918.5 189.4L1917.5 189.6L1916.5 188.5L1915.5 186.2L1914.5 186.4L1913.5 187.8L1912.5 196.5L1911.5 186.3L1910.5 186.3L1909.5 188.9L1908.5 192.0L1907.5 191.3L1906.5 199.9L1905.5 187.2L1904.5 187.3L1903.5 187.2L1902.5 188.1L1901.5 193.7L1900.5 192.3L1899.5 187.7L1898.5 186.7L1897.5 186.5L1896.5 186.3L1895.5 186.3L1894.5 187.9L1893.5 194.0L1892.5 187.2L1891.5 186.2L1890.5 186.6L1889.5 186.5L1888.5 186.1L1887.5 186.6L1886.5 188.7L1885.5 191.2L1884.5 189.6L1883.5 192.1L1882.5 198.5L1881.5 195.2L1880.5 188.8L1879.5 186.6L1878.5 189.5L1877.5 186.6L1876.5 186.2L1875.5 189.5L1874.5 186.3L1873.5 187.6L1872.5 194.8L1871.5 189.0L1870.5 189.2L1869.5 194.7L1868.5 187.9L1867.5 186.6L1866.5 191.2L1865.5 188.7L1864.5 191.1L1863.5 192.5L1862.5 190.7L1861.5 192.0L1860.5 192.6L1859.5 203.4L1858.5 199.3L1857.5 186.5L1856.5 193.6L1855.5 185.9L1854.5 187.2L1853.5 188.5L1852.5 189.7L1851.5 189.5L1850.5 200.3L1849.5 207.3L1848.5 208.0L1847.5 196.1L1846.5 204.3L1845.5 187.6L1844.5 188.7L1843.5 186.8L1842.5 186.3L1841.5 187.4L1840.5 191.1L1839.5 188.0L1838.5 186.2L1837.5 186.4L1836.5 186.7L1835.5 186.3L1834.5 185.9L1833.5 186.7L1832.5 191.8L1831.5 195.6L1830.5 189.4L1829.5 188.7L1828.5 196.5L1827.5 186.4L1826.5 196.5L1825.5 197.4L1824.5 186.3L1823.5 189.3L1822.5 188.4L1821.5 189.9L1820.5 191.8L1819.5 190.7L1818.5 186.9L1817.5 192.9L1816.5 196.5L1815.5 192.8L1814.5 190.3L1813.5 188.4L1812.5 192.0L1811.5 189.8L1810.5 186.0L1809.5 186.3L1808.5 186.9L1807.5 193.1L1806.5 193.2L1805.5 197.1L1804.5 186.7L1803.5 206.3L1802.5 188.4L1801.5 191.7L1800.5 195.0L1799.5 202.5L1798.5 187.5L1797.5 192.3L1796.5 195.0L1795.5 197.5L1794.5 199.6L1793.5 198.1L1792.5 190.2L1791.5 187.6L1790.5 189.3L1789.5 192.0L1788.5 195.5L1787.5 186.1L1786.5 186.3L1785.5 186.1L1784.5 185.9L1783.5 186.0L1782.5 186.5L1781.5 186.5L1780.5 186.5L1779.5 186.1L1778.5 188.3L1777.5 195.9L1776.5 194.9L1775.5 186.6L1774.5 197.8L1773.5 190.6L1772.5 208.0L1771.5 186.6L1770.5 191.0L1769.5 189.3L1768.5 188.5L1767.5 190.7L1766.5 194.8L1765.5 198.0L1764.5 191.5L1763.5 197.4L1762.5 205.3L1761.5 191.4L1760.5 188.7L1759.5 186.2L1758.5 189.3L1757.5 198.5L1756.5 201.4L1755.5 191.7L1754.5 192.8L1753.5 186.4L1752.5 188.7L1751.5 189.9L1750.5 186.8L1749.5 186.2L1748.5 186.3L1747.5 185.9L1746.5 186.4L1745.5 186.3L1744.5 186.9L1743.5 186.3L1742.5 186.2L1741.5 187.1L1740.5 190.2L1739.5 192.7L1738.5 186.9L1737.5 201.0L1736.5 186.5L1735.5 187.8L1734.5 186.6L1733.5 186.4L1732.5 185.7L1731.5 186.2L1730.5 185.8L1729.5 186.4L1728.5 186.7L1727.5 186.6L1726.5 186.8L1725.5 190.9L1724.5 192.6L1723.5 189.8L1722.5 197.6L1721.5 187.4L1720.5 190.5L1719.5 186.5L1718.5 186.2L1717.5 191.6L1716.5 191.0L1715.5 192.7L1714.5 193.9L1713.5 187.3L1712.5 191.3L1711.5 188.1L1710.5 191.0L1709.5 194.4L1708.5 196.3L1707.5 191.2L1706.5 186.2L1705.5 186.2L1704.5 186.6L1703.5 189.7L1702.5 189.2L1701.5 186.7L1700.5 187.8L1699.5 191.0L1698.5 200.5L1697.5 191.7L1696.5 186.3L1695.5 189.4L1694.5 186.4L1693.5 196.6L1692.5 201.6L1691.5 200.3L1690.5 195.3L1689.5 186.3L1688.5 193.3L1687.5 189.0L1686.5 190.7L1685.5 189.7L1684.5 188.5L1683.5 191.4L1682.5 186.3L1681.5 190.3L1680.5 192.0L1679.5 188.5L1678.5 189.8L1677.5 197.7L1676.5 188.6L1675.5 189.2L1674.5 190.6L1673.5 196.0L1672.5 190.2L1671.5 186.2L1670.5 193.0L1669.5 194.0L1668.5 187.9L1667.5 191.9L1666.5 190.3L1665.5 186.7L1664.5 191.6L1663.5 192.6L1662.5 194.3L1661.5 191.9L1660.5 187.9L1659.5 186.6L1658.5 186.8L1657.5 187.1L1656.5 192.8L1655.5 189.3L1654.5 187.4L1653.5 195.7L1652.5 186.9L1651.5 189.6L1650.5 186.2L1649.5 187.0L1648.5 188.1L1647.5 187.1L1646.5 187.7L1645.5 193.7L1644.5 192.4L1643.5 187.7L1642.5 200.2L1641.5 190.0L1640.5 187.4L1639.5 188.6L1638.5 195.5L1637.5 202.0L1636.5 196.2L1635.5 189.5L1634.5 190.9L1633.5 196.6L1632.5 189.8L1631.5 187.6L1630.5 186.7L1629.5 188.9L1628.5 186.3L1627.5 186.8L1626.5 185.9L1625.5 186.8L1624.5 186.3L1623.5 186.5L1622.5 186.6L1621.5 188.5L1620.5 188.7L1619.5 189.7L1618.5 186.5L1617.5 186.7L1616.5 186.5L1615.5 186.4L1614.5 191.0L1613.5 187.2L1612.5 188.5L1611.5 200.0L1610.5 186.8L1609.5 207.3L1608.5 186.4L1607.5 189.0L1606.5 188.4L1605.5 193.2L1604.5 186.0L1603.5 186.1L1602.5 186.4L1601.5 189.3L1600.5 186.4L1599.5 192.5L1598.5 189.3L1597.5 187.3L1596.5 189.6L1595.5 190.8L1594.5 188.6L1593.5 191.0L1592.5 189.4L1591.5 189.5L1590.5 196.4L1589.5 188.7L1588.5 185.9L1587.5 186.6L1586.5 194.0L1585.5 198.1L1584.5 186.6L1583.5 200.9L1582.5 198.5L1581.5 191.2L1580.5 193.2L1579.5 190.8L1578.5 186.7L1577.5 191.4L1576.5 190.9L1575.5 191.5L1574.5 186.1L1573.5 186.2L1572.5 186.5L1571.5 186.5L1570.5 186.6L1569.5 186.7L1568.5 186.7L1567.5 186.0L1566.5 186.5L1565.5 186.9L1564.5 192.5L1563.5 188.0L1562.5 189.9L1561.5 189.7L1560.5 186.3L1559.5 202.5L1558.5 190.7L1557.5 193.1L1556.5 199.6L1555.5 197.9L1554.5 190.5L1553.5 196.2L1552.5 190.6L1551.5 188.2L1550.5 187.0L1549.5 191.9L1548.5 190.3L1547.5 193.8L1546.5 192.8L1545.5 186.3L1544.5 196.7L1543.5 189.1L1542.5 189.1L1541.5 190.7L1540.5 186.1L1539.5 185.9L1538.5 193.8L1537.5 193.9L1536.5 186.7L1535.5 188.8L1534.5 187.3L1533.5 189.3L1532.5 190.9L1531.5 188.7L1530.5 190.5L1529.5 195.5L1528.5 189.7L1527.5 201.2L1526.5 186.3L1525.5 189.7L1524.5 187.7L1523.5 187.4L1522.5 194.9L1521.5 192.3L1520.5 192.3L1519.5 187.7L1518.5 186.2L1517.5 195.8L1516.5 203.0L1515.5 195.8L1514.5 186.3L1513.5 186.8L1512.5 186.4L1511.5 186.2L1510.5 186.3L1509.5 186.8L1508.5 187.6L1507.5 186.4L1506.5 190.6L1505.5 191.4L1504.5 186.3L1503.5 194.9L1502.5 201.9L1501.5 186.5L1500.5 188.3L1499.5 193.5L1498.5 186.5L1497.5 187.4L1496.5 187.3L1495.5 186.2L1494.5 187.1L1493.5 186.2L1492.5 186.8L1491.5 186.5L1490.5 186.9L1489.5 185.8L1488.5 186.1L1487.5 186.1L1486.5 192.9L1485.5 187.0L1484.5 189.0L1483.5 194.6L1482.5 186.2L1481.5 197.5L1480.5 188.4L1479.5 188.1L1478.5 190.2L1477.5 192.1L1476.5 194.5L1475.5 195.1L1474.5 186.4L1473.5 186.5L1472.5 186.8L1471.5 186.1L1470.5 192.7L1469.5 187.7L1468.5 195.7L1467.5 186.9L1466.5 200.1L1465.5 188.0L1464.5 191.8L1463.5 193.8L1462.5 194.3L1461.5 193.4L1460.5 193.8L1459.5 197.1L1458.5 187.8L1457.5 194.5L1456.5 194.2L1455.5 198.8L1454.5 193.9L1453.5 187.8L1452.5 188.8L1451.5 186.2L1450.5 186.2L1449.5 186.3L1448.5 192.9L1447.5 191.2L1446.5 190.1L1445.5 189.0L1444.5 185.9L1443.5 186.5L1442.5 186.1L1441.5 186.4L1440.5 186.0L1439.5 186.5L1438.5 190.2L1437.5 192.7L1436.5 191.1L1435.5 186.7L1434.5 192.0L1433.5 191.2L1432.5 196.1L1431.5 191.1L1430.5 186.7L1429.5 194.1L1428.5 188.1L1427.5 197.3L1426.5 187.7L1425.5 187.7L1424.5 190.1L1423.5 190.0L1422.5 189.8L1421.5 195.3L1420.5 193.5L1419.5 194.2L1418.5 191.4L1417.5 189.1L1416.5 197.0L1415.5 197.8L1414.5 190.8L1413.5 187.4L1412.5 193.5L1411.5 193.0L1410.5 193.9L1409.5 188.7L1408.5 186.4L1407.5 186.8L1406.5 186.5L1405.5 186.3L1404.5 186.1L1403.5 186.1L1402.5 189.3L1401.5 195.3L1400.5 201.5L1399.5 191.0L1398.5 194.5L1397.5 186.6L1396.5 186.4L1395.5 188.0L1394.5 187.4L1393.5 201.9L1392.5 195.7L1391.5 187.3L1390.5 190.3L1389.5 198.4L1388.5 187.6L1387.5 195.5L1386.5 193.4L1385.5 199.0L1384.5 193.4L1383.5 194.7L1382.5 200.5L1381.5 193.7L1380.5 186.8L1379.5 186.3L1378.5 186.5L1377.5 186.5L1376.5 188.4L1375.5 187.7L1374.5 192.0L1373.5 188.1L1372.5 197.9L1371.5 187.4L1370.5 192.3L1369.5 191.1L1368.5 190.0L1367.5 199.7L1366.5 195.6L1365.5 188.3L1364.5 189.2L1363.5 187.4L1362.5 193.7L1361.5 186.0L1360.5 190.4L1359.5 187.1L1358.5 189.9L1357.5 190.5L1356.5 190.5L1355.5 189.8L1354.5 193.8L1353.5 200.5L1352.5 198.7L1351.5 191.2L1350.5 187.1L1349.5 187.0L1348.5 187.2L1347.5 187.0L1346.5 192.1L1345.5 186.9L1344.5 186.2L1343.5 186.5L1342.5 186.7L1341.5 186.1L1340.5 186.4L1339.5 191.6L1338.5 192.9L1337.5 194.4L1336.5 202.4L1335.5 186.2L1334.5 190.0L1333.5 188.2L1332.5 188.8L1331.5 198.3L1330.5 192.4L1329.5 188.8L1328.5 186.7L1327.5 186.3L1326.5 190.4L1325.5 186.5L1324.5 197.1L1323.5 196.1L1322.5 192.3L1321.5 201.0L1320.5 192.1L1319.5 193.8L1318.5 189.6L1317.5 191.7L1316.5 187.4L1315.5 191.7L1314.5 187.0L1313.5 189.3L1312.5 192.5L1311.5 192.2L1310.5 197.0L1309.5 193.0L1308.5 186.0L1307.5 187.1L1306.5 189.4L1305.5 196.1L1304.5 187.8L1303.5 186.5L1302.5 188.0L1301.5 186.2L1300.5 187.8L1299.5 198.1L1298.5 192.6L1297.5 204.6L1296.5 186.2L1295.5 194.7L1294.5 193.3L1293.5 195.0L1292.5 189.1L1291.5 190.7L1290.5 194.2L1289.5 187.4L1288.5 186.2L1287.5 186.6L1286.5 191.6L1285.5 185.9L1284.5 186.6L1283.5 186.0L1282.5 186.3L1281.5 186.3L1280.5 186.5L1279.5 186.4L1278.5 191.9L1277.5 186.4L1276.5 187.5L1275.5 188.9L1274.5 190.1L1273.5 189.8L1272.5 196.9L1271.5 192.4L1270.5 203.4L1269.5 186.9L1268.5 202.9L1267.5 195.0L1266.5 188.4L1265.5 188.8L1264.5 185.8L1263.5 186.4L1262.5 186.1L1261.5 186.6L1260.5 186.4L1259.5 186.7L1258.5 186.4L1257.5 190.2L1256.5 194.2L1255.5 194.4L1254.5 190.8L1253.5 192.6L1252.5 188.5L1251.5 186.4L1250.5 186.5L1249.5 186.6L1248.5 190.9L1247.5 186.5L1246.5 191.4L1245.5 194.2L1244.5 198.4L1243.5 190.5L1242.5 190.0L1241.5 190.1L1240.5 200.4L1239.5 195.1L1238.5 195.0L1237.5 186.7L1236.5 187.4L1235.5 191.8L1234.5 191.9L1233.5 188.7L1232.5 187.5L1231.5 190.3L1230.5 186.1L1229.5 186.3L1228.5 191.0L1227.5 195.6L1226.5 193.2L1225.5 198.5L1224.5 190.0L1223.5 186.3L1222.5 187.8L1221.5 200.6L1220.5 211.0L1219.5 200.6L1218.5 196.3L1217.5 191.3L1216.5 186.0L1215.5 186.4L1214.5 186.3L1213.5 185.8L1212.5 186.6L1211.5 186.0L1210.5 194.5L1209.5 188.2L1208.5 196.3L1207.5 186.9L1206.5 187.3L1205.5 185.9L1204.5 186.1L1203.5 186.4L1202.5 186.7L1201.5 192.2L1200.5 187.2L1199.5 193.1L1198.5 187.0L1197.5 189.8L1196.5 189.4L1195.5 194.8L1194.5 189.7L1193.5 191.9L1192.5 188.8L1191.5 191.8L1190.5 196.8L1189.5 189.3L1188.5 190.8L1187.5 189.0L1186.5 188.1L1185.5 188.7L1184.5 192.0L1183.5 196.4L1182.5 187.4L1181.5 191.2L1180.5 187.8L1179.5 185.9L1178.5 186.9L1177.5 186.1L1176.5 186.3L1175.5 186.8L1174.5 185.8L1173.5 186.7L1172.5 186.2L1171.5 186.0L1170.5 192.8L1169.5 190.3L1168.5 190.4L1167.5 189.8L1166.5 193.5L1165.5 188.9L1164.5 193.7L1163.5 186.7L1162.5 186.6L1161.5 186.6L1160.5 195.6L1159.5 186.2L1158.5 189.0L1157.5 186.5L1156.5 188.2L1155.5 186.4L1154.5 187.9L1153.5 194.9L1152.5 188.3L1151.5 190.3L1150.5 188.1L1149.5 195.4L1148.5 187.7L1147.5 192.6L1146.5 186.3L1145.5 189.7L1144.5 188.4L1143.5 186.1L1142.5 186.9L1141.5 186.0L1140.5 185.8L1139.5 188.1L1138.5 194.3L1137.5 186.4L1136.5 194.2L1135.5 199.0L1134.5 192.1L1133.5 200.2L1132.5 191.5L1131.5 190.1L1130.5 203.0L1129.5 187.2L1128.5 188.3L1127.5 191.3L1126.5 189.8L1125.5 193.7L1124.5 186.3L1123.5 196.5L1122.5 196.2L1121.5 190.9L1120.5 193.0L1119.5 190.7L1118.5 191.1L1117.5 186.3L1116.5 189.1L1115.5 190.3L1114.5 187.5L1113.5 191.4L1112.5 192.8L1111.5 192.2L1110.5 197.0L1109.5 192.2L1108.5 191.0L1107.5 189.4L1106.5 190.1L1105.5 186.9L1104.5 186.3L1103.5 186.6L1102.5 186.1L1101.5 190.6L1100.5 194.2L1099.5 195.4L1098.5 186.7L1097.5 194.1L1096.5 197.3L1095.5 194.7L1094.5 190.8L1093.5 194.3L1092.5 191.6L1091.5 186.1L1090.5 190.0L1089.5 188.2L1088.5 192.4L1087.5 189.5L1086.5 186.7L1085.5 186.6L1084.5 186.7L1083.5 186.5L1082.5 186.1L1081.5 186.1L1080.5 186.5L1079.5 187.4L1078.5 188.1L1077.5 193.4L1076.5 187.4L1075.5 186.2L1074.5 191.6L1073.5 186.8L1072.5 194.9L1071.5 195.0L1070.5 188.9L1069.5 190.6L1068.5 194.7L1067.5 193.2L1066.5 186.8L1065.5 185.8L1064.5 186.4L1063.5 187.2L1062.5 194.9L1061.5 186.4L1060.5 189.4L1059.5 198.2L1058.5 188.3L1057.5 188.2L1056.5 190.1L1055.5 188.3L1054.5 192.0L1053.5 193.5L1052.5 192.4L1051.5 191.3L1050.5 187.5L1049.5 187.9L1048.5 200.3L1047.5 189.5L1046.5 187.0L1045.5 193.4L1044.5 188.8L1043.5 190.5L1042.5 186.2L1041.5 198.9L1040.5 190.0L1039.5 187.0L1038.5 186.6L1037.5 194.0L1036.5 186.7L1035.5 187.0L1034.5 190.4L1033.5 187.2L1032.5 190.1L1031.5 186.7L1030.5 188.8L1029.5 187.7L1028.5 188.3L1027.5 191.4L1026.5 194.5L1025.5 191.3L1024.5 188.8L1023.5 189.2L1022.5 191.0L1021.5 192.2L1020.5 186.4L1019.5 199.0L1018.5 186.3L1017.5 191.4L1016.5 191.2L1015.5 189.5L1014.5 195.4L1013.5 186.8L1012.5 188.9L1011.5 191.9L1010.5 189.8L1009.5 189.6L1008.5 186.5L1007.5 186.6L1006.5 186.8L1005.5 186.9L1004.5 186.1L1003.5 186.4L1002.5 186.9L1001.5 186.4L1000.5 188.5L999.5 187.3L998.5 188.5L997.5 187.4L996.5 191.5L995.5 188.7L994.5 186.8L993.5 190.2L992.5 186.3L991.5 198.4L990.5 186.5L989.5 186.7L988.5 188.4L987.5 196.1L986.5 188.3L985.5 186.5L984.5 190.6L983.5 188.2L982.5 186.1L981.5 189.6L980.5 186.9L979.5 192.3L978.5 191.7L977.5 192.3L976.5 195.2L975.5 186.2L974.5 186.5L973.5 190.7L972.5 208.0L971.5 186.2L970.5 189.9L969.5 186.2L968.5 187.0L967.5 193.5L966.5 188.7L965.5 193.6L964.5 193.4L963.5 188.0L962.5 187.0L961.5 191.7L960.5 186.4L959.5 185.9L958.5 186.5L957.5 186.2L956.5 186.2L955.5 186.2L954.5 186.8L953.5 194.3L952.5 187.1L951.5 192.9L950.5 189.2L949.5 187.0L948.5 188.0L947.5 187.6L946.5 186.7L945.5 193.3L944.5 197.0L943.5 192.2L942.5 186.4L941.5 186.7L940.5 186.0L939.5 186.7L938.5 186.5L937.5 186.2L936.5 186.7L935.5 188.9L934.5 192.8L933.5 197.1L932.5 190.1L931.5 189.0L930.5 190.2L929.5 190.7L928.5 193.6L927.5 186.6L926.5 193.4L925.5 187.3L924.5 194.2L923.5 186.2L922.5 188.8L921.5 190.0L920.5 190.7L919.5 190.1L918.5 191.4L917.5 190.4L916.5 195.5L915.5 191.1L914.5 186.0L913.5 189.3L912.5 186.7L911.5 189.4L910.5 197.3L909.5 193.3L908.5 194.7L907.5 196.2L906.5 193.4L905.5 188.3L904.5 190.9L903.5 190.7L902.5 191.3L901.5 186.6L900.5 186.0L899.5 186.6L898.5 186.5L897.5 186.0L896.5 186.4L895.5 190.2L894.5 189.5L893.5 198.8L892.5 190.8L891.5 186.4L890.5 190.0L889.5 188.7L888.5 191.2L887.5 187.0L886.5 186.3L885.5 186.2L884.5 186.1L883.5 186.6L882.5 186.2L881.5 185.9L880.5 185.9L879.5 186.1L878.5 187.0L877.5 186.3L876.5 189.3L875.5 189.8L874.5 196.8L873.5 186.9L872.5 188.6L871.5 186.4L870.5 187.6L869.5 187.7L868.5 194.1L867.5 198.6L866.5 190.5L865.5 195.4L864.5 188.1L863.5 186.8L862.5 194.5L861.5 187.8L860.5 188.7L859.5 186.4L858.5 186.4L857.5 186.5L856.5 186.6L855.5 186.1L854.5 187.2L853.5 191.0L852.5 194.3L851.5 188.9L850.5 190.6L849.5 203.4L848.5 189.8L847.5 189.1L846.5 196.0L845.5 190.1L844.5 188.3L843.5 187.9L842.5 186.1L841.5 186.7L840.5 186.3L839.5 186.7L838.5 185.9L837.5 186.3L836.5 185.8L835.5 186.3L834.5 186.5L833.5 188.6L832.5 190.8L831.5 193.4L830.5 186.2L829.5 194.0L828.5 186.6L827.5 194.9L826.5 197.2L825.5 187.6L824.5 190.1L823.5 198.2L822.5 193.8L821.5 188.7L820.5 196.8L819.5 188.1L818.5 186.3L817.5 187.2L816.5 189.7L815.5 186.6L814.5 189.9L813.5 186.3L812.5 186.3L811.5 186.9L810.5 193.4L809.5 197.6L808.5 190.8L807.5 195.1L806.5 190.2L805.5 186.2L804.5 188.9L803.5 189.2L802.5 192.4L801.5 191.2L800.5 194.3L799.5 190.9L798.5 186.8L797.5 191.4L796.5 189.9L795.5 193.5L794.5 189.2L793.5 187.8L792.5 186.5L791.5 186.3L790.5 187.9L789.5 187.4L788.5 186.8L787.5 193.4L786.5 199.0L785.5 193.4L784.5 197.6L783.5 186.9L782.5 199.5L781.5 186.4L780.5 187.1L779.5 191.2L778.5 189.6L777.5 189.0L776.5 195.4L775.5 190.4L774.5 186.9L773.5 194.6L772.5 189.1L771.5 194.2L770.5 188.7L769.5 186.2L768.5 186.6L767.5 187.0L766.5 186.6L765.5 185.8L764.5 186.6L763.5 186.8L762.5 185.9L761.5 186.2L760.5 186.2L759.5 188.2L758.5 186.2L757.5 193.9L756.5 192.8L755.5 186.6L754.5 190.3L753.5 196.6L752.5 186.4L751.5 186.2L750.5 186.3L749.5 195.2L748.5 188.0L747.5 196.8L746.5 192.5L745.5 189.5L744.5 200.9L743.5 191.7L742.5 188.4L741.5 201.2L740.5 198.5L739.5 195.3L738.5 191.2L737.5 187.0L736.5 192.7L735.5 186.6L734.5 196.5L733.5 189.4L732.5 186.4L731.5 186.5L730.5 192.7L729.5 186.8L728.5 186.7L727.5 186.2L726.5 186.4L725.5 186.2L724.5 197.1L723.5 198.9L722.5 190.7L721.5 187.4L720.5 189.7L719.5 194.5L718.5 187.5L717.5 186.5L716.5 186.3L715.5 186.0L714.5 185.9L713.5 187.3L712.5 190.8L711.5 188.9L710.5 197.7L709.5 193.1L708.5 187.2L707.5 195.1L706.5 195.9L705.5 188.5L704.5 187.5L703.5 190.5L702.5 192.9L701.5 186.7L700.5 191.5L699.5 198.0L698.5 187.0L697.5 186.2L696.5 186.3L695.5 190.5L694.5 192.0L693.5 202.5L692.5 201.1L691.5 192.8L690.5 187.7L689.5 188.5L688.5 195.2L687.5 189.2L686.5 186.4L685.5 191.1L684.5 194.7L683.5 197.1L682.5 196.0L681.5 204.0L680.5 207.1L679.5 195.5L678.5 190.0L677.5 186.3L676.5 189.2L675.5 190.7L674.5 186.2L673.5 192.9L672.5 193.9L671.5 186.8L670.5 190.0L669.5 186.4L668.5 187.4L667.5 188.2L666.5 186.4L665.5 195.9L664.5 197.8L663.5 193.4L662.5 190.3L661.5 191.6L660.5 196.0L659.5 191.6L658.5 186.4L657.5 186.0L656.5 186.1L655.5 186.8L654.5 189.5L653.5 186.7L652.5 187.7L651.5 188.9L650.5 190.5L649.5 187.3L648.5 194.5L647.5 198.2L646.5 191.0L645.5 187.9L644.5 186.5L643.5 195.4L642.5 186.7L641.5 186.2L640.5 196.5L639.5 187.9L638.5 188.8L637.5 186.4L636.5 189.1L635.5 189.0L634.5 196.7L633.5 195.4L632.5 190.2L631.5 192.3L630.5 186.3L629.5 186.5L628.5 186.4L627.5 186.8L626.5 190.3L625.5 187.3L624.5 190.5L623.5 187.4L622.5 186.6L621.5 192.9L620.5 186.4L619.5 186.8L618.5 186.8L617.5 186.5L616.5 194.4L615.5 189.1L614.5 194.0L613.5 186.6L612.5 199.8L611.5 195.3L610.5 188.8L609.5 192.7L608.5 187.6L607.5 199.3L606.5 189.3L605.5 189.9L604.5 192.9L603.5 186.5L602.5 188.2L601.5 202.7L600.5 199.6L599.5 186.3L598.5 193.7L597.5 191.4L596.5 194.8L595.5 186.4L594.5 187.0L593.5 191.0L592.5 186.5L591.5 186.8L590.5 186.6L589.5 186.3L588.5 188.2L587.5 188.9L586.5 187.5L585.5 193.2L584.5 186.4L583.5 194.9L582.5 195.6L581.5 189.5L580.5 194.0L579.5 200.0L578.5 194.0L577.5 186.5L576.5 190.0L575.5 200.1L574.5 186.2L573.5 193.1L572.5 186.4L571.5 186.3L570.5 189.5L569.5 195.6L568.5 193.4L567.5 192.4L566.5 196.7L565.5 187.2L564.5 188.8L563.5 188.8L562.5 188.1L561.5 186.7L560.5 186.3L559.5 194.4L558.5 190.7L557.5 193.6L556.5 198.6L555.5 189.8L554.5 189.5L553.5 186.2L552.5 188.1L551.5 196.0L550.5 203.1L549.5 196.2L548.5 186.4L547.5 191.9L546.5 189.9L545.5 194.9L544.5 187.0L543.5 197.9L542.5 191.0L541.5 186.6L540.5 190.2L539.5 186.6L538.5 187.6L537.5 185.8L536.5 190.3L535.5 186.8L534.5 192.8L533.5 201.3L532.5 193.8L531.5 186.9L530.5 190.2L529.5 186.5L528.5 189.3L527.5 186.5L526.5 187.7L525.5 186.4L524.5 190.3L523.5 199.1L522.5 194.8L521.5 187.5L520.5 190.5L519.5 185.9L518.5 186.5L517.5 186.8L516.5 186.4L515.5 189.8L514.5 192.5L513.5 189.4L512.5 186.2L511.5 197.8L510.5 192.0L509.5 186.3L508.5 197.1L507.5 190.8L506.5 188.9L505.5 191.8L504.5 197.0L503.5 205.0L502.5 197.0L501.5 192.5L500.5 196.4L499.5 187.3L498.5 191.6L497.5 187.8L496.5 193.3L495.5 188.8L494.5 186.8L493.5 188.3L492.5 200.9L491.5 189.9L490.5 202.3L489.5 192.5L488.5 206.0L487.5 199.5L486.5 187.5L485.5 188.9L484.5 192.8L483.5 189.2L482.5 186.4L481.5 186.1L480.5 185.9L479.5 186.2L478.5 186.1L477.5 186.4L476.5 186.0L475.5 186.1L474.5 186.6L473.5 189.0L472.5 188.2L471.5 187.0L470.5 188.5L469.5 186.2L468.5 187.5L467.5 186.3L466.5 186.3L465.5 186.8L464.5 186.3L463.5 189.3L462.5 190.9L461.5 188.1L460.5 191.9L459.5 186.3L458.5 197.6L457.5 197.8L456.5 196.1L455.5 199.8L454.5 194.5L453.5 196.8L452.5 198.8L451.5 187.2L450.5 189.9L449.5 186.8L448.5 186.4L447.5 186.8L446.5 187.5L445.5 189.6L444.5 187.4L443.5 192.6L442.5 195.3L441.5 188.1L440.5 197.1L439.5 188.8L438.5 196.0L437.5 188.7L436.5 190.4L435.5 195.1L434.5 189.5L433.5 191.1L432.5 187.1L431.5 198.7L430.5 189.1L429.5 186.6L428.5 189.2L427.5 186.5L426.5 186.7L425.5 187.1L424.5 186.1L423.5 187.6L422.5 189.4L421.5 187.4L420.5 202.2L419.5 187.6L418.5 186.1L417.5 186.3L416.5 187.1L415.5 190.1L414.5 186.4L413.5 197.2L412.5 187.2L411.5 186.9L410.5 187.8L409.5 193.1L408.5 186.3L407.5 186.5L406.5 186.4L405.5 188.4L404.5 191.7L403.5 189.2L402.5 187.8L401.5 194.1L400.5 194.3L399.5 195.7L398.5 189.4L397.5 189.5L396.5 195.9L395.5 188.0L394.5 188.5L393.5 189.8L392.5 187.4L391.5 186.3L390.5 186.6L389.5 187.4L388.5 197.6L387.5 196.8L386.5 191.0L385.5 197.4L384.5 194.5L383.5 187.9L382.5 194.2L381.5 186.6L380.5 186.9L379.5 187.1L378.5 198.3L377.5 187.1L376.5 189.0L375.5 187.4L374.5 186.5L373.5 191.2L372.5 188.8L371.5 186.9L370.5 186.8Z" fill="#4a0c82"/>
</svg>
<!-- track header icons -->
<svg style="left:94px;top:127px" width="274" height="118" viewBox="94 127 274 118">
  <g fill="none" stroke="#6a6a6a" stroke-width="1.5" stroke-linejoin="round">
    <path d="M284.9 152.4 Q285.5 155.8 289.4 156.4 Q285.5 157 284.9 160.4 Q284.3 157 280.4 156.4 Q284.3 155.8 284.9 152.4 Z"/>
  </g>
  <line x1="296.2" y1="158.2" x2="286.8" y2="167.8" stroke="#6a6a6a" stroke-width="4.4" stroke-linecap="round"/>
  <line x1="296.2" y1="158.2" x2="286.8" y2="167.8" stroke="#f4f6f6" stroke-width="1.5" stroke-linecap="round"/>
  <circle cx="319.4" cy="160.75" r="2.45" fill="#959595"/><circle cx="330.3" cy="160.75" r="2.45" fill="#959595"/><circle cx="341.2" cy="160.75" r="2.45" fill="#959595"/>
  <g fill="none" stroke="#6a6a6a" stroke-width="1.7" stroke-linecap="round" stroke-linejoin="round">
    <path d="M121.3 220.5 A9.5 9.5 0 1 1 138.4 220.5"/>
    <ellipse cx="124.6" cy="220.6" rx="2.1" ry="3.9" transform="rotate(-25 124.6 220.6)"/>
    <ellipse cx="135.1" cy="220.6" rx="2.1" ry="3.9" transform="rotate(25 135.1 220.6)"/>
  </g>
  <g fill="none" stroke="#6a6a6a" stroke-width="1.4" stroke-linecap="round" stroke-linejoin="round">
    <line x1="171.2" y1="206.3" x2="171.2" y2="224.5"/>
    <line x1="163.3" y1="210.8" x2="179.1" y2="219.9"/><line x1="163.3" y1="219.9" x2="179.1" y2="210.8"/>
    <polyline points="168.6,207.6 171.2,210.2 173.8,207.6"/>
    <polyline points="168.6,207.6 171.2,210.2 173.8,207.6" transform="rotate(60 171.2 215.4)"/><polyline points="168.6,207.6 171.2,210.2 173.8,207.6" transform="rotate(120 171.2 215.4)"/>
    <polyline points="168.6,207.6 171.2,210.2 173.8,207.6" transform="rotate(180 171.2 215.4)"/><polyline points="168.6,207.6 171.2,210.2 173.8,207.6" transform="rotate(240 171.2 215.4)"/><polyline points="168.6,207.6 171.2,210.2 173.8,207.6" transform="rotate(300 171.2 215.4)"/>
  </g>
  <g fill="none" stroke="#6a6a6a" stroke-width="1.8" stroke-linecap="round" stroke-linejoin="round">
    <path d="M205.5 210.5 L211.8 206.6 Q214.3 205.4 214.3 208.3 L214.3 222.6 Q214.3 225.4 211.8 224 L205.5 220.4 Q203.5 219.5 203.5 217.5 L203.5 213.4 Q203.5 211.4 205.5 210.5 Z"/>
    <line x1="217.6" y1="212.8" x2="221.8" y2="217.6"/><line x1="221.8" y1="212.8" x2="217.6" y2="217.6"/>
  </g>
</svg>
<div class="a" style="left:236px;top:212.3px;width:106px;height:6px;border-radius:3px;background:#e8eaea;"></div>
<div class="a" style="left:236px;top:212.4px;width:74px;height:6px;border-radius:3px;background:#18625b;"></div>
<div class="a" style="left:300.6px;top:205.5px;width:16.6px;height:16.6px;border-radius:50%;background:#fbfbfb;border:1.7px solid #1d5c56;box-shadow:0 3px 5px rgba(0,0,0,0.13);"></div>

<!-- new track -->
<div class="a" style="left:107.5px;top:257.5px;width:238px;height:67px;border-radius:11px;background:#fff;border:1px solid #efefef;box-shadow:0 1px 3px rgba(0,0,0,0.05);"></div>
<svg style="left:0;top:0" width="400" height="340" viewBox="0 0 400 340">
  <circle cx="168.7" cy="292.6" r="12" fill="#147d77"/>
  <g stroke="#fff" stroke-width="1.8" stroke-linecap="round"><line x1="168.7" y1="286.2" x2="168.7" y2="299"/><line x1="162.3" y1="292.6" x2="175.1" y2="292.6"/></g>
</svg>

<!-- drop zone -->
<svg style="left:0;top:0" width="2000" height="340" viewBox="0 0 2000 340">
  <rect x="384.3" y="256.8" width="1600" height="68.8" rx="20" fill="none" stroke="#d9d9d9" stroke-width="1.4" stroke-dasharray="4.2 2.8"/>
</svg>
<svg style="left:0;top:0" width="2000" height="340" viewBox="0 0 2000 340">
  <g fill="none" stroke="#6e6e6e" stroke-width="2" stroke-linecap="round" stroke-linejoin="round">
    <line x1="996.3" y1="278.5" x2="996.3" y2="296"/>
    <polyline points="990.5,284 996.3,278.2 1002.1,284"/>
    <path d="M982 298.5 Q996.3 308 1010.6 298.5"/>
  </g>
</svg>

<div class="a" style="left:1997.5px;top:81px;width:3px;height:966px;background:#fff;"></div>
<!-- right panel border + toggle -->
<svg style="left:1900px;top:80px" width="100" height="970" viewBox="1900 80 100 970">
  <path d="M1997.5 81 L1997.5 507 Q1997.5 515 1992 521 Q1986 527 1986 535 L1986 592 Q1986 600 1992 606 Q1997.5 612 1997.5 620 L1997.5 1047" fill="none" stroke="#e7e7e7" stroke-width="1.3"/>
  <polyline points="1999.5,558 1994,564 1999.5,570" fill="none" stroke="#707070" stroke-width="1.6" stroke-linecap="round" stroke-linejoin="round"/>
</svg>

<!-- playhead -->
<div class="a" style="left:367.8px;top:100px;width:2px;height:881px;background:#1d7f79;"></div>
<svg style="left:340px;top:80px" width="60" height="50" viewBox="340 80 60 50">
  <path d="M363.5 92.3 L374 92.3 Q377 92.3 377 95.3 L377 108 Q377 110.5 375 112 L369.8 116 Q368.7 116.8 367.6 116 L362.4 112 Q360.4 110.5 360.4 108 L360.4 95.3 Q360.4 92.3 363.5 92.3Z" fill="#15918a"/>
</svg>

<!-- scrollbar -->
<div class="a" style="left:388px;top:1019px;width:1602px;height:9px;border-radius:5px;background:#f0f0f0;"></div>
<div class="a" style="left:388px;top:1019px;width:43px;height:9px;border-radius:5px;background:#d4d6d7;"></div>

<!-- AI button -->
<div class="a" style="left:1909px;top:923px;width:61px;height:61px;border-radius:50%;border:5px solid #cde7e4;background:#fff;"></div>
<svg style="left:1900px;top:920px" width="80" height="80" viewBox="1900 920 80 80">
  <g fill="none" stroke="#128680" stroke-width="2.9" stroke-linejoin="round">
    <path d="M1939.6 942.3 Q1942.8 951.2 1951.8 954.2 Q1942.8 957.2 1939.6 966.2 Q1936.4 957.2 1927.4 954.2 Q1936.4 951.2 1939.6 942.3Z"/>
    <path d="M1953.5 962.2 Q1955.2 966.5 1959.9 968.1 Q1955.2 969.7 1953.5 974.1 Q1951.8 969.7 1947.1 968.1 Q1951.8 966.5 1953.5 962.2Z" stroke-width="2.6"/>
  </g>
  <circle cx="1953.5" cy="943.8" r="2" fill="#128680"/><circle cx="1958.8" cy="949" r="1.2" fill="#128680"/>
  <circle cx="1934" cy="973.5" r="2" fill="#128680"/><circle cx="1929" cy="968" r="1.2" fill="#128680"/>
</svg>

<!-- bottom bar -->
<div class="a" style="left:94px;top:1047px;width:1906px;height:1.2px;background:#e8e8e8;"></div>
<svg style="left:0;top:1050px" width="2000" height="65" viewBox="0 1050 2000 65">
  <g fill="none" stroke="#707070" stroke-width="1.8" stroke-linecap="round" stroke-linejoin="round">
    <circle cx="373" cy="1083.3" r="9.5"/>
    <line x1="369.5" y1="1071.2" x2="376.5" y2="1071.2"/>
    <line x1="373" y1="1083.3" x2="376.5" y2="1079"/>
  </g>
  <g fill="none" stroke="#747474" stroke-width="2.2" stroke-linejoin="round" stroke-linecap="round">
    <path d="M985.3 1075.2 Q985.3 1073.3 983.7 1074.2 L973.6 1080.8 Q971.9 1082.2 973.6 1083.6 L983.7 1090.3 Q985.3 1091.2 985.3 1089.3 Z"/>
    <path d="M1000.3 1075.2 Q1000.3 1073.3 998.7 1074.2 L988.6 1080.8 Q986.9 1082.2 988.6 1083.6 L998.7 1090.3 Q1000.3 1091.2 1000.3 1089.3 Z"/>
    <path d="M1103 1075.2 Q1103 1073.3 1104.6 1074.2 L1114.7 1080.8 Q1116.4 1082.2 1114.7 1083.6 L1104.6 1090.3 Q1103 1091.2 1103 1089.3 Z"/>
    <path d="M1118 1075.2 Q1118 1073.3 1119.6 1074.2 L1129.7 1080.8 Q1131.4 1082.2 1129.7 1083.6 L1119.6 1090.3 Q1118 1091.2 1118 1089.3 Z"/>
  </g>
  <path d="M1042.5 1069.5 Q1045 1067.5 1048 1069 L1063.5 1079.5 Q1066 1082.3 1063.5 1085 L1048 1095.5 Q1045 1097.3 1042.5 1095.2 Q1040 1093.5 1040 1090 L1040 1074.5 Q1040 1071.2 1042.5 1069.5Z" fill="#1a1a1a"/>
  <g fill="none" stroke="#6e6e6e" stroke-width="1.8" stroke-linecap="round">
    <circle cx="1796.5" cy="1082.3" r="9.4"/><line x1="1792" y1="1082.3" x2="1801" y2="1082.3"/>
    <circle cx="1950" cy="1082.3" r="9.4"/><line x1="1945.5" y1="1082.3" x2="1954.5" y2="1082.3"/><line x1="1950" y1="1077.8" x2="1950" y2="1086.8"/>
  </g>
</svg>
<div class="a" style="left:1826px;top:1079.3px;width:94px;height:6px;border-radius:3px;background:#e8e8e8;"></div>
<div class="a" style="left:1826px;top:1079.3px;width:34px;height:6px;border-radius:3px;background:#18625b;"></div>
<div class="a" style="left:1850px;top:1072.5px;width:15.5px;height:15.5px;border-radius:50%;background:#fafafa;border:1.8px solid #1d5c56;box-shadow:0 3px 5px rgba(0,0,0,0.12);"></div>

<!-- chat float -->
<div class="a" style="left:23.5px;top:1017.5px;width:70.5px;height:70.5px;border-radius:50%;background:#1f2021;box-shadow:0 4px 12px rgba(0,0,0,0.18);"></div>
<svg style="left:0;top:1000px" width="100" height="110" viewBox="0 1000 100 110">
  <path d="M47.5 1034.8 L70.5 1034.8 Q74.9 1034.8 74.9 1039.2 L74.9 1070.8 L66 1067.5 L47.5 1067.5 Q43.2 1067.5 43.2 1063.1 L43.2 1039.2 Q43.2 1034.8 47.5 1034.8Z" fill="#fff"/>
  <path d="M49.5 1057 Q59 1062.8 68.5 1057" fill="none" stroke="#1f2021" stroke-width="2.2" stroke-linecap="round"/>
</svg>

<div class="t" style="left:178.3px;top:18.8px;font-size:19.5px;color:#141414;font-weight:700;letter-spacing:-0.53px;">Project 3</div>
<div class="t" style="left:177.8px;top:47.6px;font-size:16.6px;color:#6f6f6f;font-weight:400;letter-spacing:0.61px;-webkit-text-stroke:0.3px #6f6f6f;">Sergio Montanino</div>
<div class="t" style="left:745.5px;top:49.9px;font-size:15.2px;color:#d02b60;font-weight:400;letter-spacing:-0.42px;-webkit-text-stroke:0.55px #d02b60;">Record</div>
<div class="t" style="left:843.4px;top:50.3px;font-size:14.8px;color:#6e6e6e;font-weight:400;letter-spacing:0.12px;-webkit-text-stroke:0.35px #6e6e6e;">Insert</div>
<div class="t" style="left:923.7px;top:50.3px;font-size:14.8px;color:#6e6e6e;font-weight:400;letter-spacing:0.11px;-webkit-text-stroke:0.35px #6e6e6e;">Generate</div>
<div class="t" style="left:1047.0px;top:50.1px;font-size:14.8px;color:#6e6e6e;font-weight:400;letter-spacing:0.09px;-webkit-text-stroke:0.35px #6e6e6e;">Select</div>
<div class="t" style="left:1220.0px;top:29.7px;font-size:17.5px;color:#151515;font-weight:700;letter-spacing:-0.64px;">Audio</div>
<div class="t" style="left:1332.0px;top:30.3px;font-size:17.4px;color:#979797;font-weight:400;letter-spacing:0.83px;-webkit-text-stroke:0.55px #979797;">Text</div>
<div class="t" style="left:1369.6px;top:7.7px;font-size:14.5px;color:#ffffff;font-weight:700;letter-spacing:0.74px;">NEW</div>
<div class="t" style="left:1890.4px;top:29.7px;font-size:18px;color:#ffffff;font-weight:700;letter-spacing:0.36px;">Export</div>
<div class="t" style="left:374.2px;top:94.6px;font-size:18px;color:#b9b9b9;font-weight:400;letter-spacing:1.39px;">00:00</div>
<div class="t" style="left:595.6px;top:94.6px;font-size:18px;color:#b9b9b9;font-weight:400;letter-spacing:-0.56px;">00:15</div>
<div class="t" style="left:816.9px;top:94.6px;font-size:18px;color:#b9b9b9;font-weight:400;letter-spacing:0.81px;">00:30</div>
<div class="t" style="left:1038.0px;top:94.6px;font-size:18px;color:#b9b9b9;font-weight:400;letter-spacing:0.59px;">00:45</div>
<div class="t" style="left:1259.4px;top:94.6px;font-size:18px;color:#b9b9b9;font-weight:400;letter-spacing:-0.11px;">01:00</div>
<div class="t" style="left:1480.7px;top:94.6px;font-size:18px;color:#b9b9b9;font-weight:400;letter-spacing:-1.89px;">01:15</div>
<div class="t" style="left:1701.9px;top:94.6px;font-size:18px;color:#b9b9b9;font-weight:400;letter-spacing:-0.64px;">01:30</div>
<div class="t" style="left:1923.2px;top:94.6px;font-size:18px;color:#b9b9b9;font-weight:400;letter-spacing:-0.96px;">01:45</div>
<div class="t" style="left:121.3px;top:157.3px;font-size:17.2px;color:#6b6b6b;font-weight:400;letter-spacing:-0.93px;-webkit-text-stroke:0.2px #6b6b6b;">Track 1</div>
<div class="t" style="left:197.0px;top:281.6px;font-size:20.5px;color:#107c74;font-weight:700;letter-spacing:-0.68px;">New track</div>
<div class="t" style="left:1027.0px;top:280.4px;font-size:20.8px;color:#737373;font-weight:400;letter-spacing:-0.62px;-webkit-text-stroke:0.3px #737373;">Drag and Drop files here or click to upload</div>
<div class="t" style="left:-156.2px;width:400px;text-align:center;top:208.3px;font-size:16.2px;color:#666666;font-weight:400;letter-spacing:-0.24px;-webkit-text-stroke:0.35px #666666;">My Files</div>
<div class="t" style="left:-156.2px;width:400px;text-align:center;top:320.3px;font-size:16.2px;color:#666666;font-weight:400;letter-spacing:-0.18px;-webkit-text-stroke:0.35px #666666;">Music</div>
<div class="t" style="left:-156.2px;width:400px;text-align:center;top:432.3px;font-size:16.2px;color:#666666;font-weight:400;letter-spacing:-0.19px;-webkit-text-stroke:0.35px #666666;">Voices</div>
<div class="t" style="left:-156.2px;width:400px;text-align:center;top:544.3px;font-size:16.2px;color:#666666;font-weight:400;letter-spacing:-1.35px;-webkit-text-stroke:0.35px #666666;">SFX</div>
<div class="t" style="left:136.3px;top:1072.6px;font-size:20px;color:#1e1e1e;font-weight:400;letter-spacing:0.09px;-webkit-text-stroke:0.35px #1e1e1e;">0:00:00.00</div>
<div class="t" style="left:237.5px;top:1072.6px;font-size:20px;color:#777777;font-weight:400;letter-spacing:0.00px;-webkit-text-stroke:0.3px #777777;">/</div>
<div class="t" style="left:250.3px;top:1072.6px;font-size:20px;color:#777777;font-weight:400;letter-spacing:0.09px;-webkit-text-stroke:0.3px #777777;">0:06:58.02</div>

</body></html>
